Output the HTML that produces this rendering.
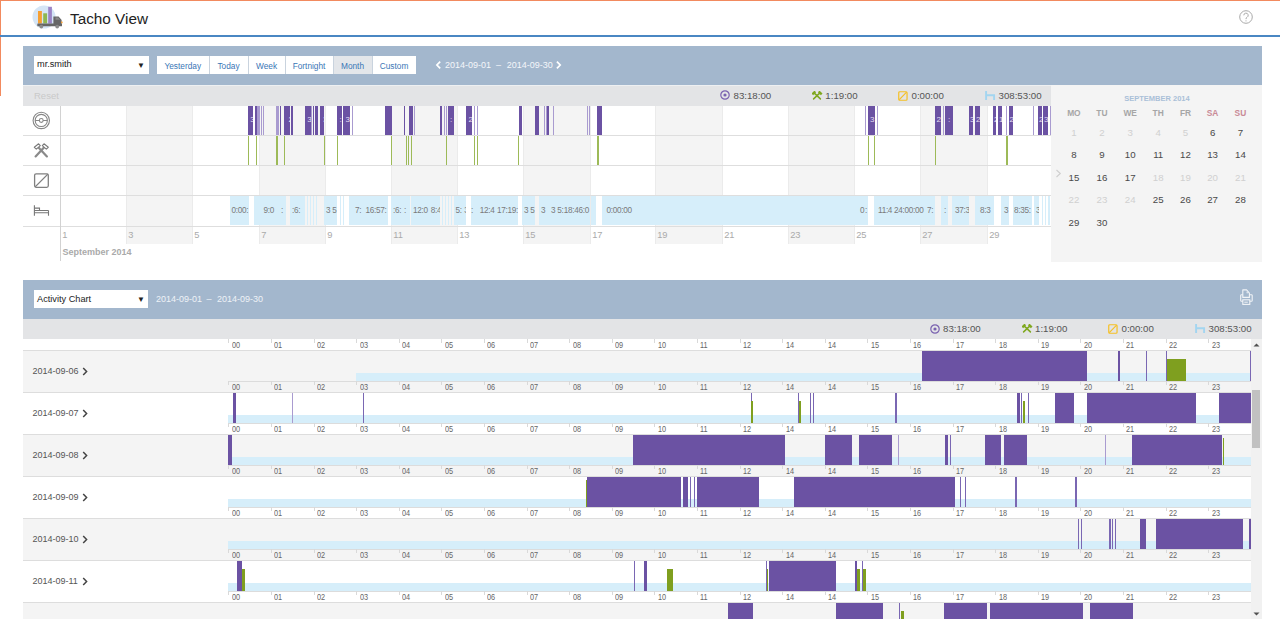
<!DOCTYPE html><html><head><meta charset="utf-8"><title>Tacho View</title><style>
*{margin:0;padding:0;box-sizing:border-box}
html,body{width:1280px;height:621px;overflow:hidden;background:#fff;font-family:"Liberation Sans",sans-serif;color:#333}
.a{position:absolute}
.t{position:absolute;white-space:nowrap}
</style></head><body><div style="position:absolute;left:0.00px;top:0.00px;width:1280.00px;height:1.00px;background:#f28a5e;"></div><div style="position:absolute;left:0.00px;top:0.00px;width:1.00px;height:96.00px;background:#f28a5e;"></div><svg class="a" style="left:0;top:0" width="70" height="34" viewBox="0 0 70 34">
<circle cx="44" cy="17" r="11.5" fill="#d5e5f5"/>
<rect x="38" y="11" width="3.9" height="12.5" fill="#f7a033"/>
<rect x="43.2" y="13.3" width="3.9" height="10.2" fill="#8fb850"/>
<rect x="48.2" y="6.8" width="3.7" height="16.7" fill="#9b84c6"/>
<path d="M53.4 16.4 h5.2 l3 3.6 v4 h-8.2z" fill="#666"/>
<path d="M55.5 17.4 h2.6 l2 2.4 h-4.6z" fill="#888"/>
<rect x="37.3" y="23.5" width="24.7" height="2.8" rx="0.6" fill="#666"/>
<circle cx="41.3" cy="26.6" r="1.9" fill="#8a8a8a"/>
<circle cx="57.2" cy="26.6" r="1.9" fill="#8a8a8a"/>
<rect x="61" y="21.6" width="1.6" height="1.6" fill="#f7a033"/>
</svg><div class="t" style="left:70px;top:9.6px;font-size:15.3px;color:#222">Tacho View</div><div style="position:absolute;left:0.00px;top:35.00px;width:1280.00px;height:2.00px;background:#4a87c3;"></div><svg class="a" style="left:1238px;top:9px" width="16" height="16" viewBox="0 0 16 16">
<circle cx="8" cy="8" r="6.3" fill="none" stroke="#aaa" stroke-width="1"/>
<path d="M5.8 6.3 a2.2 2.2 0 1 1 3.2 2 c-0.8 0.4 -1 0.9 -1 1.8" fill="none" stroke="#aaa" stroke-width="1"/>
<circle cx="8" cy="11.8" r="0.6" fill="#aaa"/>
</svg><div style="position:absolute;left:23.00px;top:46.00px;width:1239.00px;height:39.00px;background:#a3b7cd;"></div><div class="a" style="left:34px;top:56px;width:114.6px;height:18px;background:#fff"></div><div class="t" style="left:37px;top:59px;font-size:9.2px;color:#222">mr.smith</div><div class="t" style="left:137px;top:60.8px;font-size:8px;color:#222">&#9660;</div><div class="a" style="left:156.5px;top:56px;width:52.5px;height:18px;background:#fff;text-align:center;font-size:8.3px;line-height:20.2px;color:#3a76b6">Yesterday</div><div class="a" style="left:209px;top:56px;width:39px;height:18px;background:#fff;text-align:center;font-size:8.3px;line-height:20.2px;color:#3a76b6">Today</div><div style="position:absolute;left:209.00px;top:56.00px;width:1.00px;height:18.00px;background:#c9d3de;"></div><div class="a" style="left:248px;top:56px;width:37px;height:18px;background:#fff;text-align:center;font-size:8.3px;line-height:20.2px;color:#3a76b6">Week</div><div style="position:absolute;left:248.00px;top:56.00px;width:1.00px;height:18.00px;background:#c9d3de;"></div><div class="a" style="left:285px;top:56px;width:48px;height:18px;background:#fff;text-align:center;font-size:8.3px;line-height:20.2px;color:#3a76b6">Fortnight</div><div style="position:absolute;left:285.00px;top:56.00px;width:1.00px;height:18.00px;background:#c9d3de;"></div><div class="a" style="left:333px;top:56px;width:39px;height:18px;background:#e3e6ea;text-align:center;font-size:8.3px;line-height:20.2px;color:#3a76b6">Month</div><div style="position:absolute;left:333.00px;top:56.00px;width:1.00px;height:18.00px;background:#c9d3de;"></div><div class="a" style="left:372px;top:56px;width:44px;height:18px;background:#fff;text-align:center;font-size:8.3px;line-height:20.2px;color:#3a76b6">Custom</div><div style="position:absolute;left:372.00px;top:56.00px;width:1.00px;height:18.00px;background:#c9d3de;"></div><svg class="a" style="left:434px;top:60px" width="8" height="10" viewBox="0 0 8 10"><path d="M6.2 1.7 L2.9 5 L6.2 8.3" fill="none" stroke="#fff" stroke-width="1.7"/></svg><div class="t" style="left:445px;top:60px;font-size:9px;color:#f4f6fa">2014-09-01</div><div class="t" style="left:496px;top:60px;font-size:9px;color:#f4f6fa">&ndash;</div><div class="t" style="left:506.7px;top:60px;font-size:9px;color:#f4f6fa">2014-09-30</div><svg class="a" style="left:554px;top:60px" width="8" height="10" viewBox="0 0 8 10"><path d="M2.9 1.7 L6.2 5 L2.9 8.3" fill="none" stroke="#fff" stroke-width="1.7"/></svg><div style="position:absolute;left:23.00px;top:85.00px;width:1029.00px;height:21.00px;background:#e3e4e6;"></div><div style="position:absolute;left:23.00px;top:85.00px;width:1029.00px;height:1.00px;background:#eef0f2;"></div><div class="t" style="left:34px;top:90px;font-size:9.5px;color:#c9c9c9">Reset</div><svg class="a" style="left:719px;top:89.3px" width="12" height="12" viewBox="0 0 12 12"><circle cx="6" cy="6" r="4.2" fill="none" stroke="#7a62b0" stroke-width="1.2"/><circle cx="6" cy="6" r="1.6" fill="#7a62b0"/></svg><div class="t" style="left:733.5px;top:89.6px;font-size:9.7px;color:#555">83:18:00</div><svg class="a" style="left:812.0px;top:90.7px" width="11" height="10" viewBox="0 0 11 10"><path d="M2.0 1.9 L8.4 7.9 M8.0 1.9 L1.6 7.9" stroke="#7fa81f" stroke-width="1.5" fill="none" stroke-linecap="round"/><path d="M0.3 3.4 L3.3 0.4 M6.7 0.4 L9.7 3.4" stroke="#7fa81f" stroke-width="2.3" fill="none" stroke-linecap="butt"/></svg><div class="t" style="left:825.3px;top:89.6px;font-size:9.7px;color:#555">1:19:00</div><svg class="a" style="left:898px;top:90.5px" width="10" height="10" viewBox="0 0 10 10"><rect x="0.75" y="0.75" width="8.3" height="8.5" rx="1" fill="none" stroke="#f5c026" stroke-width="1.2"/><path d="M1.3 8.6 L8.6 1.2" stroke="#f5c026" stroke-width="1.2"/></svg><div class="t" style="left:911.5px;top:89.6px;font-size:9.7px;color:#555">0:00:00</div><svg class="a" style="left:985px;top:90.8px" width="11" height="10" viewBox="0 0 11 10"><path d="M1.1 0 V9 M1.1 4.3 H9.1 V9" fill="none" stroke="#a3d5f0" stroke-width="1.9"/></svg><div class="t" style="left:998.5px;top:89.6px;font-size:9.7px;color:#555">308:53:00</div><div style="position:absolute;left:60.00px;top:106.00px;width:1.00px;height:137.50px;background:#ebebeb;"></div><div class="t" style="left:62.2px;top:230.2px;font-size:9.3px;color:#aaa">1</div><div style="position:absolute;left:126.00px;top:106.00px;width:66.00px;height:137.50px;background:#f4f4f4;"></div><div style="position:absolute;left:126.00px;top:106.00px;width:1.00px;height:137.50px;background:#ebebeb;"></div><div class="t" style="left:128.2px;top:230.2px;font-size:9.3px;color:#aaa">3</div><div style="position:absolute;left:192.00px;top:106.00px;width:1.00px;height:137.50px;background:#ebebeb;"></div><div class="t" style="left:194.2px;top:230.2px;font-size:9.3px;color:#aaa">5</div><div style="position:absolute;left:259.00px;top:106.00px;width:66.00px;height:137.50px;background:#f4f4f4;"></div><div style="position:absolute;left:259.00px;top:106.00px;width:1.00px;height:137.50px;background:#ebebeb;"></div><div class="t" style="left:261.2px;top:230.2px;font-size:9.3px;color:#aaa">7</div><div style="position:absolute;left:325.00px;top:106.00px;width:1.00px;height:137.50px;background:#ebebeb;"></div><div class="t" style="left:327.2px;top:230.2px;font-size:9.3px;color:#aaa">9</div><div style="position:absolute;left:391.00px;top:106.00px;width:66.00px;height:137.50px;background:#f4f4f4;"></div><div style="position:absolute;left:391.00px;top:106.00px;width:1.00px;height:137.50px;background:#ebebeb;"></div><div class="t" style="left:393.2px;top:230.2px;font-size:9.3px;color:#aaa">11</div><div style="position:absolute;left:457.00px;top:106.00px;width:1.00px;height:137.50px;background:#ebebeb;"></div><div class="t" style="left:459.2px;top:230.2px;font-size:9.3px;color:#aaa">13</div><div style="position:absolute;left:523.00px;top:106.00px;width:67.00px;height:137.50px;background:#f4f4f4;"></div><div style="position:absolute;left:523.00px;top:106.00px;width:1.00px;height:137.50px;background:#ebebeb;"></div><div class="t" style="left:525.2px;top:230.2px;font-size:9.3px;color:#aaa">15</div><div style="position:absolute;left:590.00px;top:106.00px;width:1.00px;height:137.50px;background:#ebebeb;"></div><div class="t" style="left:592.2px;top:230.2px;font-size:9.3px;color:#aaa">17</div><div style="position:absolute;left:655.00px;top:106.00px;width:67.00px;height:137.50px;background:#f4f4f4;"></div><div style="position:absolute;left:655.00px;top:106.00px;width:1.00px;height:137.50px;background:#ebebeb;"></div><div class="t" style="left:657.2px;top:230.2px;font-size:9.3px;color:#aaa">19</div><div style="position:absolute;left:722.00px;top:106.00px;width:1.00px;height:137.50px;background:#ebebeb;"></div><div class="t" style="left:724.2px;top:230.2px;font-size:9.3px;color:#aaa">21</div><div style="position:absolute;left:788.00px;top:106.00px;width:66.00px;height:137.50px;background:#f4f4f4;"></div><div style="position:absolute;left:788.00px;top:106.00px;width:1.00px;height:137.50px;background:#ebebeb;"></div><div class="t" style="left:790.2px;top:230.2px;font-size:9.3px;color:#aaa">23</div><div style="position:absolute;left:854.00px;top:106.00px;width:1.00px;height:137.50px;background:#ebebeb;"></div><div class="t" style="left:856.2px;top:230.2px;font-size:9.3px;color:#aaa">25</div><div style="position:absolute;left:920.00px;top:106.00px;width:67.00px;height:137.50px;background:#f4f4f4;"></div><div style="position:absolute;left:920.00px;top:106.00px;width:1.00px;height:137.50px;background:#ebebeb;"></div><div class="t" style="left:922.2px;top:230.2px;font-size:9.3px;color:#aaa">27</div><div style="position:absolute;left:987.00px;top:106.00px;width:1.00px;height:137.50px;background:#ebebeb;"></div><div class="t" style="left:989.2px;top:230.2px;font-size:9.3px;color:#aaa">29</div><div style="position:absolute;left:23.00px;top:135.00px;width:1029.00px;height:1.00px;background:#dedede;"></div><div style="position:absolute;left:23.00px;top:165.00px;width:1029.00px;height:1.00px;background:#dedede;"></div><div style="position:absolute;left:23.00px;top:195.00px;width:1029.00px;height:1.00px;background:#dedede;"></div><div style="position:absolute;left:23.00px;top:226.00px;width:1029.00px;height:1.00px;background:#dedede;"></div><div style="position:absolute;left:60.00px;top:106.00px;width:1.20px;height:155.00px;background:#d2d2d2;"></div><div class="t" style="left:62.5px;top:247px;font-size:9px;font-weight:bold;color:#aaa">September 2014</div><svg class="a" style="left:30px;top:109px" width="22" height="22" viewBox="30 109 22 22">
<circle cx="41.27" cy="120.47" r="8.2" fill="none" stroke="#868686" stroke-width="1.1"/>
<circle cx="41.27" cy="120.47" r="6.1" fill="none" stroke="#868686" stroke-width="1.1"/>
<circle cx="41.27" cy="120.47" r="1.9" fill="none" stroke="#868686" stroke-width="1.1"/>
<path d="M35.2 120.47 H39.4 M43.1 120.47 H47.3" stroke="#868686" stroke-width="1.1"/>
</svg><svg class="a" style="left:30px;top:140px" width="22" height="20" viewBox="30 140 22 20">
<path d="M35.6 156.4 L44.2 147.2 M46.9 156.4 L38.3 147.2" stroke="#8a8a8a" stroke-width="2.2" stroke-linecap="round" fill="none"/>
<path d="M34.3 147.3 L38.6 143.8 L40.3 145.7 L36.3 149.1 Z" fill="#fff" stroke="#7a7a7a" stroke-width="1.1" stroke-linejoin="round"/>
<path d="M48.3 147.3 L44.0 143.8 L42.3 145.7 L46.3 149.1 Z" fill="#fff" stroke="#7a7a7a" stroke-width="1.1" stroke-linejoin="round"/>
</svg><svg class="a" style="left:30px;top:170px" width="22" height="20" viewBox="30 170 22 20">
<rect x="34.6" y="173.8" width="13.7" height="13.5" rx="1.5" fill="none" stroke="#808080" stroke-width="1.3"/>
<path d="M35 187 L48 174" stroke="#808080" stroke-width="1.1"/>
</svg><svg class="a" style="left:30px;top:200px" width="22" height="20" viewBox="30 200 22 20">
<path d="M34.4 205.3 V215.8 M48.5 210.6 V215.8" stroke="#777" stroke-width="1.1" fill="none"/>
<path d="M34.4 208.1 H39.5 V210.5" stroke="#777" stroke-width="1.1" fill="none"/>
<path d="M34.4 210.5 H48.5 M34.4 212.7 H48.5" stroke="#777" stroke-width="1.1" fill="none"/>
</svg><div class="a" style="left:248.00px;top:106px;width:5.00px;height:29px;background:#6b52a3;overflow:hidden"><span class="t" style="left:2.20px;top:8.6px;font-size:8px;color:#e4def2">3</span></div><div class="a" style="left:254.90px;top:106px;width:1.70px;height:29px;background:#6b52a3;overflow:hidden"></div><div class="a" style="left:256.90px;top:106px;width:2.80px;height:29px;background:#a99bd0;overflow:hidden"></div><div class="a" style="left:261.00px;top:106px;width:1.00px;height:29px;background:#a99bd0;overflow:hidden"></div><div class="a" style="left:263.10px;top:106px;width:0.90px;height:29px;background:#a99bd0;overflow:hidden"></div><div class="a" style="left:275.90px;top:106px;width:3.50px;height:29px;background:#a99bd0;overflow:hidden"></div><div class="a" style="left:280.00px;top:106px;width:1.10px;height:29px;background:#6b52a3;overflow:hidden"></div><div class="a" style="left:284.10px;top:106px;width:5.90px;height:29px;background:#6b52a3;overflow:hidden"><span class="t" style="left:4.40px;top:8.6px;font-size:8px;color:#e4def2">2</span></div><div class="a" style="left:290.80px;top:106px;width:1.80px;height:29px;background:#6b52a3;overflow:hidden"></div><div class="a" style="left:305.20px;top:106px;width:5.40px;height:29px;background:#6b52a3;overflow:hidden"><span class="t" style="left:2.00px;top:8.6px;font-size:8px;color:#e4def2">3</span></div><div class="a" style="left:311.00px;top:106px;width:1.00px;height:29px;background:#a99bd0;overflow:hidden"></div><div class="a" style="left:312.80px;top:106px;width:1.00px;height:29px;background:#6b52a3;overflow:hidden"></div><div class="a" style="left:314.90px;top:106px;width:3.10px;height:29px;background:#6b52a3;overflow:hidden"></div><div class="a" style="left:320.20px;top:106px;width:3.80px;height:29px;background:#6b52a3;overflow:hidden"><span class="t" style="left:2.80px;top:8.6px;font-size:8px;color:#e4def2">3</span></div><div class="a" style="left:336.60px;top:106px;width:5.40px;height:29px;background:#6b52a3;overflow:hidden"><span class="t" style="left:2.90px;top:8.6px;font-size:8px;color:#e4def2">:</span></div><div class="a" style="left:343.30px;top:106px;width:6.70px;height:29px;background:#6b52a3;overflow:hidden"><span class="t" style="left:2.20px;top:8.6px;font-size:8px;color:#e4def2">3</span></div><div class="a" style="left:352.00px;top:106px;width:1.00px;height:29px;background:#a99bd0;overflow:hidden"></div><div class="a" style="left:385.30px;top:106px;width:6.70px;height:29px;background:#6b52a3;overflow:hidden"></div><div class="a" style="left:404.00px;top:106px;width:1.00px;height:29px;background:#6b52a3;overflow:hidden"></div><div class="a" style="left:408.60px;top:106px;width:4.00px;height:29px;background:#6b52a3;overflow:hidden"></div><div class="a" style="left:413.60px;top:106px;width:1.00px;height:29px;background:#a99bd0;overflow:hidden"></div><div class="a" style="left:440.40px;top:106px;width:1.60px;height:29px;background:#6b52a3;overflow:hidden"></div><div class="a" style="left:443.50px;top:106px;width:1.00px;height:29px;background:#a99bd0;overflow:hidden"></div><div class="a" style="left:446.00px;top:106px;width:1.00px;height:29px;background:#a99bd0;overflow:hidden"></div><div class="a" style="left:448.10px;top:106px;width:5.50px;height:29px;background:#6b52a3;overflow:hidden"><span class="t" style="left:1.90px;top:8.6px;font-size:8px;color:#e4def2">:</span></div><div class="a" style="left:466.40px;top:106px;width:5.50px;height:29px;background:#6b52a3;overflow:hidden"><span class="t" style="left:2.10px;top:8.6px;font-size:8px;color:#e4def2">2</span></div><div class="a" style="left:474.00px;top:106px;width:1.00px;height:29px;background:#a99bd0;overflow:hidden"></div><div class="a" style="left:477.00px;top:106px;width:1.00px;height:29px;background:#a99bd0;overflow:hidden"></div><div class="a" style="left:519.10px;top:106px;width:2.70px;height:29px;background:#6b52a3;overflow:hidden"></div><div class="a" style="left:535.40px;top:106px;width:3.60px;height:29px;background:#6b52a3;overflow:hidden"></div><div class="a" style="left:544.00px;top:106px;width:1.00px;height:29px;background:#a99bd0;overflow:hidden"></div><div class="a" style="left:546.00px;top:106px;width:1.00px;height:29px;background:#a99bd0;overflow:hidden"></div><div class="a" style="left:547.00px;top:106px;width:2.00px;height:29px;background:#6b52a3;overflow:hidden"></div><div class="a" style="left:553.00px;top:106px;width:1.00px;height:29px;background:#a99bd0;overflow:hidden"></div><div class="a" style="left:586.50px;top:106px;width:1.00px;height:29px;background:#a99bd0;overflow:hidden"></div><div class="a" style="left:589.00px;top:106px;width:1.00px;height:29px;background:#a99bd0;overflow:hidden"></div><div class="a" style="left:597.00px;top:106px;width:5.00px;height:29px;background:#6b52a3;overflow:hidden"></div><div class="a" style="left:865.00px;top:106px;width:1.00px;height:29px;background:#a99bd0;overflow:hidden"></div><div class="a" style="left:868.10px;top:106px;width:7.10px;height:29px;background:#6b52a3;overflow:hidden"><span class="t" style="left:1.90px;top:8.6px;font-size:8px;color:#e4def2">3</span></div><div class="a" style="left:876.50px;top:106px;width:1.00px;height:29px;background:#a99bd0;overflow:hidden"></div><div class="a" style="left:935.00px;top:106px;width:6.10px;height:29px;background:#6b52a3;overflow:hidden"><span class="t" style="left:1.50px;top:8.6px;font-size:8px;color:#e4def2">2</span></div><div class="a" style="left:943.00px;top:106px;width:1.00px;height:29px;background:#a99bd0;overflow:hidden"></div><div class="a" style="left:945.20px;top:106px;width:8.10px;height:29px;background:#6b52a3;overflow:hidden"><span class="t" style="left:2.80px;top:8.6px;font-size:8px;color:#e4def2">:</span></div><div class="a" style="left:968.90px;top:106px;width:3.80px;height:29px;background:#6b52a3;overflow:hidden"><span class="t" style="left:1.10px;top:8.6px;font-size:8px;color:#e4def2">3</span></div><div class="a" style="left:975.00px;top:106px;width:4.70px;height:29px;background:#6b52a3;overflow:hidden"><span class="t" style="left:1.00px;top:8.6px;font-size:8px;color:#e4def2">2</span></div><div class="a" style="left:993.20px;top:106px;width:2.80px;height:29px;background:#6b52a3;overflow:hidden"><span class="t" style="left:0.80px;top:8.6px;font-size:8px;color:#e4def2">2</span></div><div class="a" style="left:997.90px;top:106px;width:4.10px;height:29px;background:#6b52a3;overflow:hidden"><span class="t" style="left:1.10px;top:8.6px;font-size:8px;color:#e4def2">1</span></div><div class="a" style="left:1006.00px;top:106px;width:1.00px;height:29px;background:#a99bd0;overflow:hidden"></div><div class="a" style="left:1009.00px;top:106px;width:3.50px;height:29px;background:#6b52a3;overflow:hidden"><span class="t" style="left:0.50px;top:8.6px;font-size:8px;color:#e4def2">2</span></div><div class="a" style="left:1032.50px;top:106px;width:1.00px;height:29px;background:#a99bd0;overflow:hidden"></div><div class="a" style="left:1038.00px;top:106px;width:4.00px;height:29px;background:#6b52a3;overflow:hidden"><span class="t" style="left:1.00px;top:8.6px;font-size:8px;color:#e4def2">2</span></div><div class="a" style="left:1043.00px;top:106px;width:5.00px;height:29px;background:#6b52a3;overflow:hidden"><span class="t" style="left:1.00px;top:8.6px;font-size:8px;color:#e4def2">3</span></div><div class="a" style="left:1050.00px;top:106px;width:1.00px;height:29px;background:#a99bd0;overflow:hidden"></div><div style="position:absolute;left:248.00px;top:136.00px;width:1.00px;height:29.00px;background:#9dba58;"></div><div style="position:absolute;left:256.00px;top:136.00px;width:1.00px;height:29.00px;background:#9dba58;"></div><div style="position:absolute;left:276.00px;top:136.00px;width:1.00px;height:29.00px;background:#9dba58;"></div><div style="position:absolute;left:277.00px;top:136.00px;width:1.00px;height:29.00px;background:#9dba58;"></div><div style="position:absolute;left:284.00px;top:136.00px;width:1.00px;height:29.00px;background:#9dba58;"></div><div style="position:absolute;left:324.00px;top:136.00px;width:1.00px;height:29.00px;background:#9dba58;"></div><div style="position:absolute;left:337.00px;top:136.00px;width:1.00px;height:29.00px;background:#9dba58;"></div><div style="position:absolute;left:391.00px;top:136.00px;width:1.00px;height:29.00px;background:#9dba58;"></div><div style="position:absolute;left:406.00px;top:136.00px;width:1.00px;height:29.00px;background:#9dba58;"></div><div style="position:absolute;left:408.00px;top:136.00px;width:1.00px;height:29.00px;background:#9dba58;"></div><div style="position:absolute;left:411.00px;top:136.00px;width:1.00px;height:29.00px;background:#9dba58;"></div><div style="position:absolute;left:446.00px;top:136.00px;width:1.00px;height:29.00px;background:#9dba58;"></div><div style="position:absolute;left:474.00px;top:136.00px;width:1.00px;height:29.00px;background:#9dba58;"></div><div style="position:absolute;left:477.00px;top:136.00px;width:1.00px;height:29.00px;background:#9dba58;"></div><div style="position:absolute;left:518.00px;top:136.00px;width:1.00px;height:29.00px;background:#9dba58;"></div><div style="position:absolute;left:597.00px;top:136.00px;width:1.00px;height:29.00px;background:#9dba58;"></div><div style="position:absolute;left:598.00px;top:136.00px;width:1.00px;height:29.00px;background:#9dba58;"></div><div style="position:absolute;left:868.00px;top:136.00px;width:1.00px;height:29.00px;background:#9dba58;"></div><div style="position:absolute;left:874.00px;top:136.00px;width:1.00px;height:29.00px;background:#9dba58;"></div><div style="position:absolute;left:935.00px;top:136.00px;width:1.00px;height:29.00px;background:#9dba58;"></div><div style="position:absolute;left:1006.00px;top:136.00px;width:1.00px;height:29.00px;background:#9dba58;"></div><div style="position:absolute;left:1007.00px;top:136.00px;width:1.00px;height:29.00px;background:#9dba58;"></div><div class="a" style="left:230.10px;top:196px;width:18.70px;height:29px;background:#d6eefa;overflow:hidden"><span class="t" style="left:1.40px;top:9.8px;font-size:8.2px;letter-spacing:-0.3px;color:#7a7a7a">0:00:</span></div><div class="a" style="left:253.50px;top:196px;width:32.50px;height:29px;background:#d6eefa;overflow:hidden"><span class="t" style="left:10.00px;top:9.8px;font-size:8.2px;letter-spacing:-0.3px;color:#7a7a7a">9:0</span><span class="t" style="left:27.50px;top:9.8px;font-size:8.2px;letter-spacing:-0.3px;color:#7a7a7a">:</span></div><div class="a" style="left:290.00px;top:196px;width:15.20px;height:29px;background:#d6eefa;overflow:hidden"><span class="t" style="left:2.00px;top:9.8px;font-size:8.2px;letter-spacing:-0.3px;color:#7a7a7a">:6:</span></div><div class="a" style="left:307.00px;top:196px;width:1.00px;height:29px;background:#d6eefa;overflow:hidden"></div><div class="a" style="left:310.00px;top:196px;width:1.00px;height:29px;background:#d6eefa;overflow:hidden"></div><div class="a" style="left:313.00px;top:196px;width:1.00px;height:29px;background:#d6eefa;overflow:hidden"></div><div class="a" style="left:316.00px;top:196px;width:1.00px;height:29px;background:#d6eefa;overflow:hidden"></div><div class="a" style="left:323.90px;top:196px;width:12.70px;height:29px;background:#d6eefa;overflow:hidden"><span class="t" style="left:2.10px;top:9.8px;font-size:8.2px;letter-spacing:-0.3px;color:#7a7a7a">3 5:</span></div><div class="a" style="left:340.00px;top:196px;width:1.00px;height:29px;background:#d6eefa;overflow:hidden"></div><div class="a" style="left:343.00px;top:196px;width:1.00px;height:29px;background:#d6eefa;overflow:hidden"></div><div class="a" style="left:348.80px;top:196px;width:39.60px;height:29px;background:#d6eefa;overflow:hidden"><span class="t" style="left:6.20px;top:9.8px;font-size:8.2px;letter-spacing:-0.3px;color:#7a7a7a">7:</span><span class="t" style="left:16.70px;top:9.8px;font-size:8.2px;letter-spacing:-0.3px;color:#7a7a7a">16:57:</span></div><div class="a" style="left:391.00px;top:196px;width:18.70px;height:29px;background:#d6eefa;overflow:hidden"><span class="t" style="left:2.00px;top:9.8px;font-size:8.2px;letter-spacing:-0.3px;color:#7a7a7a">:6:</span><span class="t" style="left:13.00px;top:9.8px;font-size:8.2px;letter-spacing:-0.3px;color:#7a7a7a">:</span></div><div class="a" style="left:410.70px;top:196px;width:29.70px;height:29px;background:#d6eefa;overflow:hidden"><span class="t" style="left:2.30px;top:9.8px;font-size:8.2px;letter-spacing:-0.3px;color:#7a7a7a">12:0</span><span class="t" style="left:20.00px;top:9.8px;font-size:8.2px;letter-spacing:-0.3px;color:#7a7a7a">8:4</span></div><div class="a" style="left:442.00px;top:196px;width:1.00px;height:29px;background:#d6eefa;overflow:hidden"></div><div class="a" style="left:445.00px;top:196px;width:1.00px;height:29px;background:#d6eefa;overflow:hidden"></div><div class="a" style="left:448.00px;top:196px;width:1.00px;height:29px;background:#d6eefa;overflow:hidden"></div><div class="a" style="left:451.00px;top:196px;width:1.00px;height:29px;background:#d6eefa;overflow:hidden"></div><div class="a" style="left:454.20px;top:196px;width:12.20px;height:29px;background:#d6eefa;overflow:hidden"><span class="t" style="left:1.30px;top:9.8px;font-size:8.2px;letter-spacing:-0.3px;color:#7a7a7a">5:</span><span class="t" style="left:10.00px;top:9.8px;font-size:8.2px;letter-spacing:-0.3px;color:#7a7a7a">3</span></div><div class="a" style="left:470.90px;top:196px;width:47.00px;height:29px;background:#d6eefa;overflow:hidden"><span class="t" style="left:0.10px;top:9.8px;font-size:8.2px;letter-spacing:-0.3px;color:#7a7a7a">:</span><span class="t" style="left:8.90px;top:9.8px;font-size:8.2px;letter-spacing:-0.3px;color:#7a7a7a">12:4</span><span class="t" style="left:26.10px;top:9.8px;font-size:8.2px;letter-spacing:-0.3px;color:#7a7a7a">17:19:</span></div><div class="a" style="left:522.20px;top:196px;width:13.20px;height:29px;background:#d6eefa;overflow:hidden"><span class="t" style="left:1.80px;top:9.8px;font-size:8.2px;letter-spacing:-0.3px;color:#7a7a7a">3 5:</span></div><div class="a" style="left:538.80px;top:196px;width:51.30px;height:29px;background:#d6eefa;overflow:hidden"><span class="t" style="left:2.20px;top:9.8px;font-size:8.2px;letter-spacing:-0.3px;color:#7a7a7a">3</span><span class="t" style="left:12.20px;top:9.8px;font-size:8.2px;letter-spacing:-0.3px;color:#7a7a7a">3 5:</span><span class="t" style="left:24.90px;top:9.8px;font-size:8.2px;letter-spacing:-0.3px;color:#7a7a7a">18:46:0</span></div><div class="a" style="left:591.00px;top:196px;width:5.00px;height:29px;background:#d6eefa;overflow:hidden"></div><div class="a" style="left:601.60px;top:196px;width:266.50px;height:29px;background:#d6eefa;overflow:hidden"><span class="t" style="left:4.90px;top:9.8px;font-size:8.2px;letter-spacing:-0.3px;color:#7a7a7a">0:00:00</span><span class="t" style="left:258.40px;top:9.8px;font-size:8.2px;letter-spacing:-0.3px;color:#7a7a7a">0</span><span class="t" style="left:263.40px;top:9.8px;font-size:8.2px;letter-spacing:-0.3px;color:#7a7a7a">:</span></div><div class="a" style="left:874.20px;top:196px;width:60.80px;height:29px;background:#d6eefa;overflow:hidden"><span class="t" style="left:3.80px;top:9.8px;font-size:8.2px;letter-spacing:-0.3px;color:#7a7a7a">11:4</span><span class="t" style="left:19.80px;top:9.8px;font-size:8.2px;letter-spacing:-0.3px;color:#7a7a7a">24:00:00</span><span class="t" style="left:52.90px;top:9.8px;font-size:8.2px;letter-spacing:-0.3px;color:#7a7a7a">7:</span></div><div class="a" style="left:941.00px;top:196px;width:7.00px;height:29px;background:#d6eefa;overflow:hidden"><span class="t" style="left:3.00px;top:9.8px;font-size:8.2px;letter-spacing:-0.3px;color:#7a7a7a">:</span></div><div class="a" style="left:952.00px;top:196px;width:17.00px;height:29px;background:#d6eefa;overflow:hidden"><span class="t" style="left:3.00px;top:9.8px;font-size:8.2px;letter-spacing:-0.3px;color:#7a7a7a">37:3</span></div><div class="a" style="left:975.00px;top:196px;width:18.70px;height:29px;background:#d6eefa;overflow:hidden"><span class="t" style="left:5.00px;top:9.8px;font-size:8.2px;letter-spacing:-0.3px;color:#7a7a7a">8:3</span></div><div class="a" style="left:1000.50px;top:196px;width:8.50px;height:29px;background:#d6eefa;overflow:hidden"><span class="t" style="left:3.50px;top:9.8px;font-size:8.2px;letter-spacing:-0.3px;color:#7a7a7a">3</span></div><div class="a" style="left:1012.70px;top:196px;width:19.80px;height:29px;background:#d6eefa;overflow:hidden"><span class="t" style="left:1.30px;top:9.8px;font-size:8.2px;letter-spacing:-0.3px;color:#7a7a7a">8:35:</span></div><div class="a" style="left:1033.50px;top:196px;width:5.50px;height:29px;background:#d6eefa;overflow:hidden"><span class="t" style="left:2.50px;top:9.8px;font-size:8.2px;letter-spacing:-0.3px;color:#7a7a7a">3</span></div><div class="a" style="left:1042.00px;top:196px;width:1.00px;height:29px;background:#d6eefa;overflow:hidden"></div><div class="a" style="left:1045.00px;top:196px;width:1.00px;height:29px;background:#d6eefa;overflow:hidden"></div><div class="a" style="left:1048.00px;top:196px;width:2.00px;height:29px;background:#d6eefa;overflow:hidden"></div><div style="position:absolute;left:1051.00px;top:85.00px;width:211.00px;height:177.00px;background:#f4f4f4;"></div><div class="t" style="left:1052px;top:94px;width:210px;text-align:center;font-size:7.5px;font-weight:bold;color:#aac0d8">SEPTEMBER 2014</div><div class="t" style="left:1058.9px;top:108.3px;width:30px;text-align:center;font-size:8.4px;font-weight:bold;color:#a6a6a6">MO</div><div class="t" style="left:1086.9px;top:108.3px;width:30px;text-align:center;font-size:8.4px;font-weight:bold;color:#a6a6a6">TU</div><div class="t" style="left:1115.2px;top:108.3px;width:30px;text-align:center;font-size:8.4px;font-weight:bold;color:#a6a6a6">WE</div><div class="t" style="left:1143.2px;top:108.3px;width:30px;text-align:center;font-size:8.4px;font-weight:bold;color:#a6a6a6">TH</div><div class="t" style="left:1170.5px;top:108.3px;width:30px;text-align:center;font-size:8.4px;font-weight:bold;color:#a6a6a6">FR</div><div class="t" style="left:1197.6px;top:108.3px;width:30px;text-align:center;font-size:8.4px;font-weight:bold;color:#c98a96">SA</div><div class="t" style="left:1225.4px;top:108.3px;width:30px;text-align:center;font-size:8.4px;font-weight:bold;color:#c98a96">SU</div><div class="t" style="left:1058.9px;top:126.9px;width:30px;text-align:center;font-size:9.7px;color:#d0d0d0">1</div><div class="t" style="left:1086.9px;top:126.9px;width:30px;text-align:center;font-size:9.7px;color:#d0d0d0">2</div><div class="t" style="left:1115.2px;top:126.9px;width:30px;text-align:center;font-size:9.7px;color:#d0d0d0">3</div><div class="t" style="left:1143.2px;top:126.9px;width:30px;text-align:center;font-size:9.7px;color:#d0d0d0">4</div><div class="t" style="left:1170.5px;top:126.9px;width:30px;text-align:center;font-size:9.7px;color:#d0d0d0">5</div><div class="t" style="left:1197.6px;top:126.9px;width:30px;text-align:center;font-size:9.7px;color:#494949">6</div><div class="t" style="left:1225.4px;top:126.9px;width:30px;text-align:center;font-size:9.7px;color:#494949">7</div><div class="t" style="left:1058.9px;top:149.3px;width:30px;text-align:center;font-size:9.7px;color:#494949">8</div><div class="t" style="left:1086.9px;top:149.3px;width:30px;text-align:center;font-size:9.7px;color:#494949">9</div><div class="t" style="left:1115.2px;top:149.3px;width:30px;text-align:center;font-size:9.7px;color:#494949">10</div><div class="t" style="left:1143.2px;top:149.3px;width:30px;text-align:center;font-size:9.7px;color:#494949">11</div><div class="t" style="left:1170.5px;top:149.3px;width:30px;text-align:center;font-size:9.7px;color:#494949">12</div><div class="t" style="left:1197.6px;top:149.3px;width:30px;text-align:center;font-size:9.7px;color:#494949">13</div><div class="t" style="left:1225.4px;top:149.3px;width:30px;text-align:center;font-size:9.7px;color:#494949">14</div><div class="t" style="left:1058.9px;top:171.8px;width:30px;text-align:center;font-size:9.7px;color:#494949">15</div><div class="t" style="left:1086.9px;top:171.8px;width:30px;text-align:center;font-size:9.7px;color:#494949">16</div><div class="t" style="left:1115.2px;top:171.8px;width:30px;text-align:center;font-size:9.7px;color:#494949">17</div><div class="t" style="left:1143.2px;top:171.8px;width:30px;text-align:center;font-size:9.7px;color:#d0d0d0">18</div><div class="t" style="left:1170.5px;top:171.8px;width:30px;text-align:center;font-size:9.7px;color:#d0d0d0">19</div><div class="t" style="left:1197.6px;top:171.8px;width:30px;text-align:center;font-size:9.7px;color:#d0d0d0">20</div><div class="t" style="left:1225.4px;top:171.8px;width:30px;text-align:center;font-size:9.7px;color:#d0d0d0">21</div><div class="t" style="left:1058.9px;top:194.3px;width:30px;text-align:center;font-size:9.7px;color:#d0d0d0">22</div><div class="t" style="left:1086.9px;top:194.3px;width:30px;text-align:center;font-size:9.7px;color:#d0d0d0">23</div><div class="t" style="left:1115.2px;top:194.3px;width:30px;text-align:center;font-size:9.7px;color:#d0d0d0">24</div><div class="t" style="left:1143.2px;top:194.3px;width:30px;text-align:center;font-size:9.7px;color:#494949">25</div><div class="t" style="left:1170.5px;top:194.3px;width:30px;text-align:center;font-size:9.7px;color:#494949">26</div><div class="t" style="left:1197.6px;top:194.3px;width:30px;text-align:center;font-size:9.7px;color:#494949">27</div><div class="t" style="left:1225.4px;top:194.3px;width:30px;text-align:center;font-size:9.7px;color:#494949">28</div><div class="t" style="left:1058.9px;top:216.8px;width:30px;text-align:center;font-size:9.7px;color:#494949">29</div><div class="t" style="left:1086.9px;top:216.8px;width:30px;text-align:center;font-size:9.7px;color:#494949">30</div><svg class="a" style="left:1055px;top:169px" width="7" height="9" viewBox="0 0 7 9"><path d="M1.5 1 L5.3 4.5 L1.5 8" fill="none" stroke="#cfcfcf" stroke-width="1.1"/></svg><div style="position:absolute;left:23.00px;top:280.00px;width:1239.00px;height:39.00px;background:#a3b7cd;"></div><div class="a" style="left:34px;top:290px;width:114px;height:18px;background:#fff"></div><div class="t" style="left:37px;top:293.8px;font-size:9.2px;color:#222">Activity Chart</div><div class="t" style="left:137px;top:294.8px;font-size:8px;color:#222">&#9660;</div><div class="t" style="left:156px;top:294px;font-size:9px;color:#eef2f7">2014-09-01</div><div class="t" style="left:206.5px;top:294px;font-size:9px;color:#eef2f7">&ndash;</div><div class="t" style="left:217px;top:294px;font-size:9px;color:#eef2f7">2014-09-30</div><svg class="a" style="left:1238px;top:288px" width="16" height="18" viewBox="0 0 16 18" opacity="0.85">
<rect x="2.7" y="6.7" width="11.5" height="6.6" rx="0.8" fill="none" stroke="#fff" stroke-width="1.1"/>
<path d="M4.8 9.4 V1.9 H8.6 L11.4 5.2 V9.4 Z" fill="#a3b7cd" stroke="#fff" stroke-width="1.1" stroke-linejoin="round"/>
<path d="M8.6 3.2 L10.3 5.2 H8.6 Z" fill="#fff"/>
<rect x="4.8" y="11.8" width="7.0" height="4.6" fill="#a3b7cd" stroke="#fff" stroke-width="1.1"/>
<path d="M6.3 14.2 H9.8" stroke="#fff" stroke-width="1"/>
</svg><div style="position:absolute;left:23.00px;top:319.00px;width:1239.00px;height:20.00px;background:#e3e4e6;"></div><svg class="a" style="left:928.5px;top:322.8px" width="12" height="12" viewBox="0 0 12 12"><circle cx="6" cy="6" r="4.2" fill="none" stroke="#7a62b0" stroke-width="1.2"/><circle cx="6" cy="6" r="1.6" fill="#7a62b0"/></svg><div class="t" style="left:943.0px;top:323.1px;font-size:9.7px;color:#555">83:18:00</div><svg class="a" style="left:1021.7px;top:324.2px" width="11" height="10" viewBox="0 0 11 10"><path d="M2.0 1.9 L8.4 7.9 M8.0 1.9 L1.6 7.9" stroke="#7fa81f" stroke-width="1.5" fill="none" stroke-linecap="round"/><path d="M0.3 3.4 L3.3 0.4 M6.7 0.4 L9.7 3.4" stroke="#7fa81f" stroke-width="2.3" fill="none" stroke-linecap="butt"/></svg><div class="t" style="left:1035.0px;top:323.1px;font-size:9.7px;color:#555">1:19:00</div><svg class="a" style="left:1108px;top:324.0px" width="10" height="10" viewBox="0 0 10 10"><rect x="0.75" y="0.75" width="8.3" height="8.5" rx="1" fill="none" stroke="#f5c026" stroke-width="1.2"/><path d="M1.3 8.6 L8.6 1.2" stroke="#f5c026" stroke-width="1.2"/></svg><div class="t" style="left:1121.5px;top:323.1px;font-size:9.7px;color:#555">0:00:00</div><svg class="a" style="left:1195px;top:324.3px" width="11" height="10" viewBox="0 0 11 10"><path d="M1.1 0 V9 M1.1 4.3 H9.1 V9" fill="none" stroke="#a3d5f0" stroke-width="1.9"/></svg><div class="t" style="left:1208.5px;top:323.1px;font-size:9.7px;color:#555">308:53:00</div><div style="position:absolute;left:228.40px;top:339.00px;width:1.00px;height:4.00px;background:#d9d9d9;"></div><div class="t" style="left:231.80px;top:339.8px;font-size:8.3px;color:#666;transform:scaleX(0.88);transform-origin:0 0">00</div><div style="position:absolute;left:271.00px;top:339.00px;width:1.00px;height:4.00px;background:#d9d9d9;"></div><div class="t" style="left:274.40px;top:339.8px;font-size:8.3px;color:#666;transform:scaleX(0.88);transform-origin:0 0">01</div><div style="position:absolute;left:313.60px;top:339.00px;width:1.00px;height:4.00px;background:#d9d9d9;"></div><div class="t" style="left:317.00px;top:339.8px;font-size:8.3px;color:#666;transform:scaleX(0.88);transform-origin:0 0">02</div><div style="position:absolute;left:356.20px;top:339.00px;width:1.00px;height:4.00px;background:#d9d9d9;"></div><div class="t" style="left:359.60px;top:339.8px;font-size:8.3px;color:#666;transform:scaleX(0.88);transform-origin:0 0">03</div><div style="position:absolute;left:398.80px;top:339.00px;width:1.00px;height:4.00px;background:#d9d9d9;"></div><div class="t" style="left:402.20px;top:339.8px;font-size:8.3px;color:#666;transform:scaleX(0.88);transform-origin:0 0">04</div><div style="position:absolute;left:441.40px;top:339.00px;width:1.00px;height:4.00px;background:#d9d9d9;"></div><div class="t" style="left:444.80px;top:339.8px;font-size:8.3px;color:#666;transform:scaleX(0.88);transform-origin:0 0">05</div><div style="position:absolute;left:484.00px;top:339.00px;width:1.00px;height:4.00px;background:#d9d9d9;"></div><div class="t" style="left:487.40px;top:339.8px;font-size:8.3px;color:#666;transform:scaleX(0.88);transform-origin:0 0">06</div><div style="position:absolute;left:526.60px;top:339.00px;width:1.00px;height:4.00px;background:#d9d9d9;"></div><div class="t" style="left:530.00px;top:339.8px;font-size:8.3px;color:#666;transform:scaleX(0.88);transform-origin:0 0">07</div><div style="position:absolute;left:569.20px;top:339.00px;width:1.00px;height:4.00px;background:#d9d9d9;"></div><div class="t" style="left:572.60px;top:339.8px;font-size:8.3px;color:#666;transform:scaleX(0.88);transform-origin:0 0">08</div><div style="position:absolute;left:611.80px;top:339.00px;width:1.00px;height:4.00px;background:#d9d9d9;"></div><div class="t" style="left:615.20px;top:339.8px;font-size:8.3px;color:#666;transform:scaleX(0.88);transform-origin:0 0">09</div><div style="position:absolute;left:654.40px;top:339.00px;width:1.00px;height:4.00px;background:#d9d9d9;"></div><div class="t" style="left:657.80px;top:339.8px;font-size:8.3px;color:#666;transform:scaleX(0.88);transform-origin:0 0">10</div><div style="position:absolute;left:697.00px;top:339.00px;width:1.00px;height:4.00px;background:#d9d9d9;"></div><div class="t" style="left:700.40px;top:339.8px;font-size:8.3px;color:#666;transform:scaleX(0.88);transform-origin:0 0">11</div><div style="position:absolute;left:739.60px;top:339.00px;width:1.00px;height:4.00px;background:#d9d9d9;"></div><div class="t" style="left:743.00px;top:339.8px;font-size:8.3px;color:#666;transform:scaleX(0.88);transform-origin:0 0">12</div><div style="position:absolute;left:782.20px;top:339.00px;width:1.00px;height:4.00px;background:#d9d9d9;"></div><div class="t" style="left:785.60px;top:339.8px;font-size:8.3px;color:#666;transform:scaleX(0.88);transform-origin:0 0">14</div><div style="position:absolute;left:824.80px;top:339.00px;width:1.00px;height:4.00px;background:#d9d9d9;"></div><div class="t" style="left:828.20px;top:339.8px;font-size:8.3px;color:#666;transform:scaleX(0.88);transform-origin:0 0">14</div><div style="position:absolute;left:867.40px;top:339.00px;width:1.00px;height:4.00px;background:#d9d9d9;"></div><div class="t" style="left:870.80px;top:339.8px;font-size:8.3px;color:#666;transform:scaleX(0.88);transform-origin:0 0">15</div><div style="position:absolute;left:910.00px;top:339.00px;width:1.00px;height:4.00px;background:#d9d9d9;"></div><div class="t" style="left:913.40px;top:339.8px;font-size:8.3px;color:#666;transform:scaleX(0.88);transform-origin:0 0">16</div><div style="position:absolute;left:952.60px;top:339.00px;width:1.00px;height:4.00px;background:#d9d9d9;"></div><div class="t" style="left:956.00px;top:339.8px;font-size:8.3px;color:#666;transform:scaleX(0.88);transform-origin:0 0">17</div><div style="position:absolute;left:995.20px;top:339.00px;width:1.00px;height:4.00px;background:#d9d9d9;"></div><div class="t" style="left:998.60px;top:339.8px;font-size:8.3px;color:#666;transform:scaleX(0.88);transform-origin:0 0">18</div><div style="position:absolute;left:1037.80px;top:339.00px;width:1.00px;height:4.00px;background:#d9d9d9;"></div><div class="t" style="left:1041.20px;top:339.8px;font-size:8.3px;color:#666;transform:scaleX(0.88);transform-origin:0 0">19</div><div style="position:absolute;left:1080.40px;top:339.00px;width:1.00px;height:4.00px;background:#d9d9d9;"></div><div class="t" style="left:1083.80px;top:339.8px;font-size:8.3px;color:#666;transform:scaleX(0.88);transform-origin:0 0">20</div><div style="position:absolute;left:1123.00px;top:339.00px;width:1.00px;height:4.00px;background:#d9d9d9;"></div><div class="t" style="left:1126.40px;top:339.8px;font-size:8.3px;color:#666;transform:scaleX(0.88);transform-origin:0 0">21</div><div style="position:absolute;left:1165.60px;top:339.00px;width:1.00px;height:4.00px;background:#d9d9d9;"></div><div class="t" style="left:1169.00px;top:339.8px;font-size:8.3px;color:#666;transform:scaleX(0.88);transform-origin:0 0">22</div><div style="position:absolute;left:1208.20px;top:339.00px;width:1.00px;height:4.00px;background:#d9d9d9;"></div><div class="t" style="left:1211.60px;top:339.8px;font-size:8.3px;color:#666;transform:scaleX(0.88);transform-origin:0 0">23</div><div style="position:absolute;left:23.00px;top:350.00px;width:1228.00px;height:1.00px;background:#dddddd;"></div><div style="position:absolute;left:23.00px;top:351.00px;width:1228.00px;height:41.00px;background:#f4f4f4;"></div><div class="t" style="left:32.5px;top:366px;font-size:9px;color:#555">2014-09-06</div><svg class="a" style="left:82px;top:367px" width="6" height="9" viewBox="0 0 6 9"><path d="M1.2 1 L4.6 4.5 L1.2 8" fill="none" stroke="#444" stroke-width="1.5"/></svg><div style="position:absolute;left:356.25px;top:373.40px;width:894.75px;height:7.60px;background:#d6eefa;"></div><div style="position:absolute;left:921.50px;top:354.00px;width:1.00px;height:27.00px;background:#7f9f1f;"></div><div style="position:absolute;left:922.25px;top:351.00px;width:164.50px;height:30.00px;background:#6b52a3;"></div><div style="position:absolute;left:1118.00px;top:351.00px;width:2.00px;height:30.00px;background:#6b52a3;"></div><div style="position:absolute;left:1146.00px;top:351.00px;width:1.00px;height:30.00px;background:#7a67b3;"></div><div style="position:absolute;left:1166.00px;top:351.00px;width:1.00px;height:30.00px;background:#7a67b3;"></div><div style="position:absolute;left:1167.00px;top:358.50px;width:19.25px;height:22.50px;background:#7f9f1f;"></div><div style="position:absolute;left:1249.50px;top:351.00px;width:1.50px;height:30.00px;background:#7a67b3;"></div><div style="position:absolute;left:228.40px;top:381.00px;width:1022.60px;height:1.00px;background:#dcdcdc;"></div><div style="position:absolute;left:228.40px;top:381.00px;width:1.00px;height:4.00px;background:#d9d9d9;"></div><div class="t" style="left:231.80px;top:381.8px;font-size:8.3px;color:#666;transform:scaleX(0.88);transform-origin:0 0">00</div><div style="position:absolute;left:271.00px;top:381.00px;width:1.00px;height:4.00px;background:#d9d9d9;"></div><div class="t" style="left:274.40px;top:381.8px;font-size:8.3px;color:#666;transform:scaleX(0.88);transform-origin:0 0">01</div><div style="position:absolute;left:313.60px;top:381.00px;width:1.00px;height:4.00px;background:#d9d9d9;"></div><div class="t" style="left:317.00px;top:381.8px;font-size:8.3px;color:#666;transform:scaleX(0.88);transform-origin:0 0">02</div><div style="position:absolute;left:356.20px;top:381.00px;width:1.00px;height:4.00px;background:#d9d9d9;"></div><div class="t" style="left:359.60px;top:381.8px;font-size:8.3px;color:#666;transform:scaleX(0.88);transform-origin:0 0">03</div><div style="position:absolute;left:398.80px;top:381.00px;width:1.00px;height:4.00px;background:#d9d9d9;"></div><div class="t" style="left:402.20px;top:381.8px;font-size:8.3px;color:#666;transform:scaleX(0.88);transform-origin:0 0">04</div><div style="position:absolute;left:441.40px;top:381.00px;width:1.00px;height:4.00px;background:#d9d9d9;"></div><div class="t" style="left:444.80px;top:381.8px;font-size:8.3px;color:#666;transform:scaleX(0.88);transform-origin:0 0">05</div><div style="position:absolute;left:484.00px;top:381.00px;width:1.00px;height:4.00px;background:#d9d9d9;"></div><div class="t" style="left:487.40px;top:381.8px;font-size:8.3px;color:#666;transform:scaleX(0.88);transform-origin:0 0">06</div><div style="position:absolute;left:526.60px;top:381.00px;width:1.00px;height:4.00px;background:#d9d9d9;"></div><div class="t" style="left:530.00px;top:381.8px;font-size:8.3px;color:#666;transform:scaleX(0.88);transform-origin:0 0">07</div><div style="position:absolute;left:569.20px;top:381.00px;width:1.00px;height:4.00px;background:#d9d9d9;"></div><div class="t" style="left:572.60px;top:381.8px;font-size:8.3px;color:#666;transform:scaleX(0.88);transform-origin:0 0">08</div><div style="position:absolute;left:611.80px;top:381.00px;width:1.00px;height:4.00px;background:#d9d9d9;"></div><div class="t" style="left:615.20px;top:381.8px;font-size:8.3px;color:#666;transform:scaleX(0.88);transform-origin:0 0">09</div><div style="position:absolute;left:654.40px;top:381.00px;width:1.00px;height:4.00px;background:#d9d9d9;"></div><div class="t" style="left:657.80px;top:381.8px;font-size:8.3px;color:#666;transform:scaleX(0.88);transform-origin:0 0">10</div><div style="position:absolute;left:697.00px;top:381.00px;width:1.00px;height:4.00px;background:#d9d9d9;"></div><div class="t" style="left:700.40px;top:381.8px;font-size:8.3px;color:#666;transform:scaleX(0.88);transform-origin:0 0">11</div><div style="position:absolute;left:739.60px;top:381.00px;width:1.00px;height:4.00px;background:#d9d9d9;"></div><div class="t" style="left:743.00px;top:381.8px;font-size:8.3px;color:#666;transform:scaleX(0.88);transform-origin:0 0">12</div><div style="position:absolute;left:782.20px;top:381.00px;width:1.00px;height:4.00px;background:#d9d9d9;"></div><div class="t" style="left:785.60px;top:381.8px;font-size:8.3px;color:#666;transform:scaleX(0.88);transform-origin:0 0">14</div><div style="position:absolute;left:824.80px;top:381.00px;width:1.00px;height:4.00px;background:#d9d9d9;"></div><div class="t" style="left:828.20px;top:381.8px;font-size:8.3px;color:#666;transform:scaleX(0.88);transform-origin:0 0">14</div><div style="position:absolute;left:867.40px;top:381.00px;width:1.00px;height:4.00px;background:#d9d9d9;"></div><div class="t" style="left:870.80px;top:381.8px;font-size:8.3px;color:#666;transform:scaleX(0.88);transform-origin:0 0">15</div><div style="position:absolute;left:910.00px;top:381.00px;width:1.00px;height:4.00px;background:#d9d9d9;"></div><div class="t" style="left:913.40px;top:381.8px;font-size:8.3px;color:#666;transform:scaleX(0.88);transform-origin:0 0">16</div><div style="position:absolute;left:952.60px;top:381.00px;width:1.00px;height:4.00px;background:#d9d9d9;"></div><div class="t" style="left:956.00px;top:381.8px;font-size:8.3px;color:#666;transform:scaleX(0.88);transform-origin:0 0">17</div><div style="position:absolute;left:995.20px;top:381.00px;width:1.00px;height:4.00px;background:#d9d9d9;"></div><div class="t" style="left:998.60px;top:381.8px;font-size:8.3px;color:#666;transform:scaleX(0.88);transform-origin:0 0">18</div><div style="position:absolute;left:1037.80px;top:381.00px;width:1.00px;height:4.00px;background:#d9d9d9;"></div><div class="t" style="left:1041.20px;top:381.8px;font-size:8.3px;color:#666;transform:scaleX(0.88);transform-origin:0 0">19</div><div style="position:absolute;left:1080.40px;top:381.00px;width:1.00px;height:4.00px;background:#d9d9d9;"></div><div class="t" style="left:1083.80px;top:381.8px;font-size:8.3px;color:#666;transform:scaleX(0.88);transform-origin:0 0">20</div><div style="position:absolute;left:1123.00px;top:381.00px;width:1.00px;height:4.00px;background:#d9d9d9;"></div><div class="t" style="left:1126.40px;top:381.8px;font-size:8.3px;color:#666;transform:scaleX(0.88);transform-origin:0 0">21</div><div style="position:absolute;left:1165.60px;top:381.00px;width:1.00px;height:4.00px;background:#d9d9d9;"></div><div class="t" style="left:1169.00px;top:381.8px;font-size:8.3px;color:#666;transform:scaleX(0.88);transform-origin:0 0">22</div><div style="position:absolute;left:1208.20px;top:381.00px;width:1.00px;height:4.00px;background:#d9d9d9;"></div><div class="t" style="left:1211.60px;top:381.8px;font-size:8.3px;color:#666;transform:scaleX(0.88);transform-origin:0 0">23</div><div style="position:absolute;left:23.00px;top:392.00px;width:1228.00px;height:1.00px;background:#dddddd;"></div><div style="position:absolute;left:23.00px;top:393.00px;width:1228.00px;height:41.00px;background:#ffffff;"></div><div class="t" style="left:32.5px;top:408px;font-size:9px;color:#555">2014-09-07</div><svg class="a" style="left:82px;top:409px" width="6" height="9" viewBox="0 0 6 9"><path d="M1.2 1 L4.6 4.5 L1.2 8" fill="none" stroke="#444" stroke-width="1.5"/></svg><div style="position:absolute;left:228.40px;top:415.40px;width:1022.60px;height:7.60px;background:#d6eefa;"></div><div style="position:absolute;left:233.00px;top:393.00px;width:2.50px;height:30.00px;background:#6b52a3;"></div><div style="position:absolute;left:292.00px;top:393.00px;width:1.00px;height:30.00px;background:#a99bd0;"></div><div style="position:absolute;left:363.00px;top:393.00px;width:1.00px;height:30.00px;background:#7a67b3;"></div><div style="position:absolute;left:750.50px;top:393.00px;width:1.00px;height:30.00px;background:#7a67b3;"></div><div style="position:absolute;left:751.25px;top:400.50px;width:1.75px;height:22.50px;background:#7f9f1f;"></div><div style="position:absolute;left:798.00px;top:393.00px;width:1.00px;height:30.00px;background:#7a67b3;"></div><div style="position:absolute;left:799.00px;top:400.50px;width:2.00px;height:22.50px;background:#7f9f1f;"></div><div style="position:absolute;left:810.00px;top:393.00px;width:1.00px;height:30.00px;background:#7a67b3;"></div><div style="position:absolute;left:813.00px;top:393.00px;width:1.00px;height:30.00px;background:#7a67b3;"></div><div style="position:absolute;left:895.00px;top:393.00px;width:1.50px;height:30.00px;background:#7a67b3;"></div><div style="position:absolute;left:1017.00px;top:393.00px;width:2.50px;height:30.00px;background:#6b52a3;"></div><div style="position:absolute;left:1021.00px;top:393.00px;width:1.00px;height:30.00px;background:#7a67b3;"></div><div style="position:absolute;left:1022.50px;top:400.50px;width:2.00px;height:22.50px;background:#7f9f1f;"></div><div style="position:absolute;left:1027.50px;top:393.00px;width:1.00px;height:30.00px;background:#7a67b3;"></div><div style="position:absolute;left:1055.25px;top:393.00px;width:18.75px;height:30.00px;background:#6b52a3;"></div><div style="position:absolute;left:1087.00px;top:393.00px;width:108.60px;height:30.00px;background:#6b52a3;"></div><div style="position:absolute;left:1219.00px;top:393.00px;width:32.00px;height:30.00px;background:#6b52a3;"></div><div style="position:absolute;left:228.40px;top:423.00px;width:1022.60px;height:1.00px;background:#dcdcdc;"></div><div style="position:absolute;left:228.40px;top:423.00px;width:1.00px;height:4.00px;background:#d9d9d9;"></div><div class="t" style="left:231.80px;top:423.8px;font-size:8.3px;color:#666;transform:scaleX(0.88);transform-origin:0 0">00</div><div style="position:absolute;left:271.00px;top:423.00px;width:1.00px;height:4.00px;background:#d9d9d9;"></div><div class="t" style="left:274.40px;top:423.8px;font-size:8.3px;color:#666;transform:scaleX(0.88);transform-origin:0 0">01</div><div style="position:absolute;left:313.60px;top:423.00px;width:1.00px;height:4.00px;background:#d9d9d9;"></div><div class="t" style="left:317.00px;top:423.8px;font-size:8.3px;color:#666;transform:scaleX(0.88);transform-origin:0 0">02</div><div style="position:absolute;left:356.20px;top:423.00px;width:1.00px;height:4.00px;background:#d9d9d9;"></div><div class="t" style="left:359.60px;top:423.8px;font-size:8.3px;color:#666;transform:scaleX(0.88);transform-origin:0 0">03</div><div style="position:absolute;left:398.80px;top:423.00px;width:1.00px;height:4.00px;background:#d9d9d9;"></div><div class="t" style="left:402.20px;top:423.8px;font-size:8.3px;color:#666;transform:scaleX(0.88);transform-origin:0 0">04</div><div style="position:absolute;left:441.40px;top:423.00px;width:1.00px;height:4.00px;background:#d9d9d9;"></div><div class="t" style="left:444.80px;top:423.8px;font-size:8.3px;color:#666;transform:scaleX(0.88);transform-origin:0 0">05</div><div style="position:absolute;left:484.00px;top:423.00px;width:1.00px;height:4.00px;background:#d9d9d9;"></div><div class="t" style="left:487.40px;top:423.8px;font-size:8.3px;color:#666;transform:scaleX(0.88);transform-origin:0 0">06</div><div style="position:absolute;left:526.60px;top:423.00px;width:1.00px;height:4.00px;background:#d9d9d9;"></div><div class="t" style="left:530.00px;top:423.8px;font-size:8.3px;color:#666;transform:scaleX(0.88);transform-origin:0 0">07</div><div style="position:absolute;left:569.20px;top:423.00px;width:1.00px;height:4.00px;background:#d9d9d9;"></div><div class="t" style="left:572.60px;top:423.8px;font-size:8.3px;color:#666;transform:scaleX(0.88);transform-origin:0 0">08</div><div style="position:absolute;left:611.80px;top:423.00px;width:1.00px;height:4.00px;background:#d9d9d9;"></div><div class="t" style="left:615.20px;top:423.8px;font-size:8.3px;color:#666;transform:scaleX(0.88);transform-origin:0 0">09</div><div style="position:absolute;left:654.40px;top:423.00px;width:1.00px;height:4.00px;background:#d9d9d9;"></div><div class="t" style="left:657.80px;top:423.8px;font-size:8.3px;color:#666;transform:scaleX(0.88);transform-origin:0 0">10</div><div style="position:absolute;left:697.00px;top:423.00px;width:1.00px;height:4.00px;background:#d9d9d9;"></div><div class="t" style="left:700.40px;top:423.8px;font-size:8.3px;color:#666;transform:scaleX(0.88);transform-origin:0 0">11</div><div style="position:absolute;left:739.60px;top:423.00px;width:1.00px;height:4.00px;background:#d9d9d9;"></div><div class="t" style="left:743.00px;top:423.8px;font-size:8.3px;color:#666;transform:scaleX(0.88);transform-origin:0 0">12</div><div style="position:absolute;left:782.20px;top:423.00px;width:1.00px;height:4.00px;background:#d9d9d9;"></div><div class="t" style="left:785.60px;top:423.8px;font-size:8.3px;color:#666;transform:scaleX(0.88);transform-origin:0 0">14</div><div style="position:absolute;left:824.80px;top:423.00px;width:1.00px;height:4.00px;background:#d9d9d9;"></div><div class="t" style="left:828.20px;top:423.8px;font-size:8.3px;color:#666;transform:scaleX(0.88);transform-origin:0 0">14</div><div style="position:absolute;left:867.40px;top:423.00px;width:1.00px;height:4.00px;background:#d9d9d9;"></div><div class="t" style="left:870.80px;top:423.8px;font-size:8.3px;color:#666;transform:scaleX(0.88);transform-origin:0 0">15</div><div style="position:absolute;left:910.00px;top:423.00px;width:1.00px;height:4.00px;background:#d9d9d9;"></div><div class="t" style="left:913.40px;top:423.8px;font-size:8.3px;color:#666;transform:scaleX(0.88);transform-origin:0 0">16</div><div style="position:absolute;left:952.60px;top:423.00px;width:1.00px;height:4.00px;background:#d9d9d9;"></div><div class="t" style="left:956.00px;top:423.8px;font-size:8.3px;color:#666;transform:scaleX(0.88);transform-origin:0 0">17</div><div style="position:absolute;left:995.20px;top:423.00px;width:1.00px;height:4.00px;background:#d9d9d9;"></div><div class="t" style="left:998.60px;top:423.8px;font-size:8.3px;color:#666;transform:scaleX(0.88);transform-origin:0 0">18</div><div style="position:absolute;left:1037.80px;top:423.00px;width:1.00px;height:4.00px;background:#d9d9d9;"></div><div class="t" style="left:1041.20px;top:423.8px;font-size:8.3px;color:#666;transform:scaleX(0.88);transform-origin:0 0">19</div><div style="position:absolute;left:1080.40px;top:423.00px;width:1.00px;height:4.00px;background:#d9d9d9;"></div><div class="t" style="left:1083.80px;top:423.8px;font-size:8.3px;color:#666;transform:scaleX(0.88);transform-origin:0 0">20</div><div style="position:absolute;left:1123.00px;top:423.00px;width:1.00px;height:4.00px;background:#d9d9d9;"></div><div class="t" style="left:1126.40px;top:423.8px;font-size:8.3px;color:#666;transform:scaleX(0.88);transform-origin:0 0">21</div><div style="position:absolute;left:1165.60px;top:423.00px;width:1.00px;height:4.00px;background:#d9d9d9;"></div><div class="t" style="left:1169.00px;top:423.8px;font-size:8.3px;color:#666;transform:scaleX(0.88);transform-origin:0 0">22</div><div style="position:absolute;left:1208.20px;top:423.00px;width:1.00px;height:4.00px;background:#d9d9d9;"></div><div class="t" style="left:1211.60px;top:423.8px;font-size:8.3px;color:#666;transform:scaleX(0.88);transform-origin:0 0">23</div><div style="position:absolute;left:23.00px;top:434.00px;width:1228.00px;height:1.00px;background:#dddddd;"></div><div style="position:absolute;left:23.00px;top:435.00px;width:1228.00px;height:41.00px;background:#f4f4f4;"></div><div class="t" style="left:32.5px;top:450px;font-size:9px;color:#555">2014-09-08</div><svg class="a" style="left:82px;top:451px" width="6" height="9" viewBox="0 0 6 9"><path d="M1.2 1 L4.6 4.5 L1.2 8" fill="none" stroke="#444" stroke-width="1.5"/></svg><div style="position:absolute;left:228.40px;top:457.40px;width:1022.60px;height:7.60px;background:#d6eefa;"></div><div style="position:absolute;left:228.40px;top:435.00px;width:4.10px;height:30.00px;background:#6b52a3;"></div><div style="position:absolute;left:633.00px;top:435.00px;width:152.00px;height:30.00px;background:#6b52a3;"></div><div style="position:absolute;left:825.00px;top:435.00px;width:26.75px;height:30.00px;background:#6b52a3;"></div><div style="position:absolute;left:858.75px;top:435.00px;width:33.00px;height:30.00px;background:#6b52a3;"></div><div style="position:absolute;left:898.00px;top:435.00px;width:1.00px;height:30.00px;background:#a99bd0;"></div><div style="position:absolute;left:945.00px;top:435.00px;width:2.75px;height:30.00px;background:#6b52a3;"></div><div style="position:absolute;left:950.00px;top:435.00px;width:1.00px;height:30.00px;background:#7a67b3;"></div><div style="position:absolute;left:985.00px;top:435.00px;width:15.50px;height:30.00px;background:#6b52a3;"></div><div style="position:absolute;left:1003.75px;top:435.00px;width:23.50px;height:30.00px;background:#6b52a3;"></div><div style="position:absolute;left:1105.00px;top:435.00px;width:1.00px;height:30.00px;background:#a99bd0;"></div><div style="position:absolute;left:1132.00px;top:435.00px;width:90.40px;height:30.00px;background:#6b52a3;"></div><div style="position:absolute;left:1222.50px;top:438.00px;width:1.00px;height:27.00px;background:#7f9f1f;"></div><div style="position:absolute;left:228.40px;top:465.00px;width:1022.60px;height:1.00px;background:#dcdcdc;"></div><div style="position:absolute;left:228.40px;top:465.00px;width:1.00px;height:4.00px;background:#d9d9d9;"></div><div class="t" style="left:231.80px;top:465.8px;font-size:8.3px;color:#666;transform:scaleX(0.88);transform-origin:0 0">00</div><div style="position:absolute;left:271.00px;top:465.00px;width:1.00px;height:4.00px;background:#d9d9d9;"></div><div class="t" style="left:274.40px;top:465.8px;font-size:8.3px;color:#666;transform:scaleX(0.88);transform-origin:0 0">01</div><div style="position:absolute;left:313.60px;top:465.00px;width:1.00px;height:4.00px;background:#d9d9d9;"></div><div class="t" style="left:317.00px;top:465.8px;font-size:8.3px;color:#666;transform:scaleX(0.88);transform-origin:0 0">02</div><div style="position:absolute;left:356.20px;top:465.00px;width:1.00px;height:4.00px;background:#d9d9d9;"></div><div class="t" style="left:359.60px;top:465.8px;font-size:8.3px;color:#666;transform:scaleX(0.88);transform-origin:0 0">03</div><div style="position:absolute;left:398.80px;top:465.00px;width:1.00px;height:4.00px;background:#d9d9d9;"></div><div class="t" style="left:402.20px;top:465.8px;font-size:8.3px;color:#666;transform:scaleX(0.88);transform-origin:0 0">04</div><div style="position:absolute;left:441.40px;top:465.00px;width:1.00px;height:4.00px;background:#d9d9d9;"></div><div class="t" style="left:444.80px;top:465.8px;font-size:8.3px;color:#666;transform:scaleX(0.88);transform-origin:0 0">05</div><div style="position:absolute;left:484.00px;top:465.00px;width:1.00px;height:4.00px;background:#d9d9d9;"></div><div class="t" style="left:487.40px;top:465.8px;font-size:8.3px;color:#666;transform:scaleX(0.88);transform-origin:0 0">06</div><div style="position:absolute;left:526.60px;top:465.00px;width:1.00px;height:4.00px;background:#d9d9d9;"></div><div class="t" style="left:530.00px;top:465.8px;font-size:8.3px;color:#666;transform:scaleX(0.88);transform-origin:0 0">07</div><div style="position:absolute;left:569.20px;top:465.00px;width:1.00px;height:4.00px;background:#d9d9d9;"></div><div class="t" style="left:572.60px;top:465.8px;font-size:8.3px;color:#666;transform:scaleX(0.88);transform-origin:0 0">08</div><div style="position:absolute;left:611.80px;top:465.00px;width:1.00px;height:4.00px;background:#d9d9d9;"></div><div class="t" style="left:615.20px;top:465.8px;font-size:8.3px;color:#666;transform:scaleX(0.88);transform-origin:0 0">09</div><div style="position:absolute;left:654.40px;top:465.00px;width:1.00px;height:4.00px;background:#d9d9d9;"></div><div class="t" style="left:657.80px;top:465.8px;font-size:8.3px;color:#666;transform:scaleX(0.88);transform-origin:0 0">10</div><div style="position:absolute;left:697.00px;top:465.00px;width:1.00px;height:4.00px;background:#d9d9d9;"></div><div class="t" style="left:700.40px;top:465.8px;font-size:8.3px;color:#666;transform:scaleX(0.88);transform-origin:0 0">11</div><div style="position:absolute;left:739.60px;top:465.00px;width:1.00px;height:4.00px;background:#d9d9d9;"></div><div class="t" style="left:743.00px;top:465.8px;font-size:8.3px;color:#666;transform:scaleX(0.88);transform-origin:0 0">12</div><div style="position:absolute;left:782.20px;top:465.00px;width:1.00px;height:4.00px;background:#d9d9d9;"></div><div class="t" style="left:785.60px;top:465.8px;font-size:8.3px;color:#666;transform:scaleX(0.88);transform-origin:0 0">14</div><div style="position:absolute;left:824.80px;top:465.00px;width:1.00px;height:4.00px;background:#d9d9d9;"></div><div class="t" style="left:828.20px;top:465.8px;font-size:8.3px;color:#666;transform:scaleX(0.88);transform-origin:0 0">14</div><div style="position:absolute;left:867.40px;top:465.00px;width:1.00px;height:4.00px;background:#d9d9d9;"></div><div class="t" style="left:870.80px;top:465.8px;font-size:8.3px;color:#666;transform:scaleX(0.88);transform-origin:0 0">15</div><div style="position:absolute;left:910.00px;top:465.00px;width:1.00px;height:4.00px;background:#d9d9d9;"></div><div class="t" style="left:913.40px;top:465.8px;font-size:8.3px;color:#666;transform:scaleX(0.88);transform-origin:0 0">16</div><div style="position:absolute;left:952.60px;top:465.00px;width:1.00px;height:4.00px;background:#d9d9d9;"></div><div class="t" style="left:956.00px;top:465.8px;font-size:8.3px;color:#666;transform:scaleX(0.88);transform-origin:0 0">17</div><div style="position:absolute;left:995.20px;top:465.00px;width:1.00px;height:4.00px;background:#d9d9d9;"></div><div class="t" style="left:998.60px;top:465.8px;font-size:8.3px;color:#666;transform:scaleX(0.88);transform-origin:0 0">18</div><div style="position:absolute;left:1037.80px;top:465.00px;width:1.00px;height:4.00px;background:#d9d9d9;"></div><div class="t" style="left:1041.20px;top:465.8px;font-size:8.3px;color:#666;transform:scaleX(0.88);transform-origin:0 0">19</div><div style="position:absolute;left:1080.40px;top:465.00px;width:1.00px;height:4.00px;background:#d9d9d9;"></div><div class="t" style="left:1083.80px;top:465.8px;font-size:8.3px;color:#666;transform:scaleX(0.88);transform-origin:0 0">20</div><div style="position:absolute;left:1123.00px;top:465.00px;width:1.00px;height:4.00px;background:#d9d9d9;"></div><div class="t" style="left:1126.40px;top:465.8px;font-size:8.3px;color:#666;transform:scaleX(0.88);transform-origin:0 0">21</div><div style="position:absolute;left:1165.60px;top:465.00px;width:1.00px;height:4.00px;background:#d9d9d9;"></div><div class="t" style="left:1169.00px;top:465.8px;font-size:8.3px;color:#666;transform:scaleX(0.88);transform-origin:0 0">22</div><div style="position:absolute;left:1208.20px;top:465.00px;width:1.00px;height:4.00px;background:#d9d9d9;"></div><div class="t" style="left:1211.60px;top:465.8px;font-size:8.3px;color:#666;transform:scaleX(0.88);transform-origin:0 0">23</div><div style="position:absolute;left:23.00px;top:476.00px;width:1228.00px;height:1.00px;background:#dddddd;"></div><div style="position:absolute;left:23.00px;top:477.00px;width:1228.00px;height:41.00px;background:#ffffff;"></div><div class="t" style="left:32.5px;top:492px;font-size:9px;color:#555">2014-09-09</div><svg class="a" style="left:82px;top:493px" width="6" height="9" viewBox="0 0 6 9"><path d="M1.2 1 L4.6 4.5 L1.2 8" fill="none" stroke="#444" stroke-width="1.5"/></svg><div style="position:absolute;left:228.40px;top:499.40px;width:1022.60px;height:7.60px;background:#d6eefa;"></div><div style="position:absolute;left:586.00px;top:480.00px;width:1.00px;height:27.00px;background:#7f9f1f;"></div><div style="position:absolute;left:587.00px;top:477.00px;width:93.75px;height:30.00px;background:#6b52a3;"></div><div style="position:absolute;left:682.50px;top:477.00px;width:5.50px;height:30.00px;background:#6b52a3;"></div><div style="position:absolute;left:689.50px;top:477.00px;width:1.00px;height:30.00px;background:#7a67b3;"></div><div style="position:absolute;left:694.00px;top:477.00px;width:1.00px;height:30.00px;background:#7a67b3;"></div><div style="position:absolute;left:696.75px;top:477.00px;width:62.25px;height:30.00px;background:#6b52a3;"></div><div style="position:absolute;left:794.25px;top:477.00px;width:160.75px;height:30.00px;background:#6b52a3;"></div><div style="position:absolute;left:960.00px;top:477.00px;width:1.00px;height:30.00px;background:#7a67b3;"></div><div style="position:absolute;left:964.50px;top:477.00px;width:1.50px;height:30.00px;background:#7a67b3;"></div><div style="position:absolute;left:1015.00px;top:477.00px;width:1.50px;height:30.00px;background:#7a67b3;"></div><div style="position:absolute;left:1075.00px;top:477.00px;width:1.50px;height:30.00px;background:#7a67b3;"></div><div style="position:absolute;left:228.40px;top:507.00px;width:1022.60px;height:1.00px;background:#dcdcdc;"></div><div style="position:absolute;left:228.40px;top:507.00px;width:1.00px;height:4.00px;background:#d9d9d9;"></div><div class="t" style="left:231.80px;top:507.8px;font-size:8.3px;color:#666;transform:scaleX(0.88);transform-origin:0 0">00</div><div style="position:absolute;left:271.00px;top:507.00px;width:1.00px;height:4.00px;background:#d9d9d9;"></div><div class="t" style="left:274.40px;top:507.8px;font-size:8.3px;color:#666;transform:scaleX(0.88);transform-origin:0 0">01</div><div style="position:absolute;left:313.60px;top:507.00px;width:1.00px;height:4.00px;background:#d9d9d9;"></div><div class="t" style="left:317.00px;top:507.8px;font-size:8.3px;color:#666;transform:scaleX(0.88);transform-origin:0 0">02</div><div style="position:absolute;left:356.20px;top:507.00px;width:1.00px;height:4.00px;background:#d9d9d9;"></div><div class="t" style="left:359.60px;top:507.8px;font-size:8.3px;color:#666;transform:scaleX(0.88);transform-origin:0 0">03</div><div style="position:absolute;left:398.80px;top:507.00px;width:1.00px;height:4.00px;background:#d9d9d9;"></div><div class="t" style="left:402.20px;top:507.8px;font-size:8.3px;color:#666;transform:scaleX(0.88);transform-origin:0 0">04</div><div style="position:absolute;left:441.40px;top:507.00px;width:1.00px;height:4.00px;background:#d9d9d9;"></div><div class="t" style="left:444.80px;top:507.8px;font-size:8.3px;color:#666;transform:scaleX(0.88);transform-origin:0 0">05</div><div style="position:absolute;left:484.00px;top:507.00px;width:1.00px;height:4.00px;background:#d9d9d9;"></div><div class="t" style="left:487.40px;top:507.8px;font-size:8.3px;color:#666;transform:scaleX(0.88);transform-origin:0 0">06</div><div style="position:absolute;left:526.60px;top:507.00px;width:1.00px;height:4.00px;background:#d9d9d9;"></div><div class="t" style="left:530.00px;top:507.8px;font-size:8.3px;color:#666;transform:scaleX(0.88);transform-origin:0 0">07</div><div style="position:absolute;left:569.20px;top:507.00px;width:1.00px;height:4.00px;background:#d9d9d9;"></div><div class="t" style="left:572.60px;top:507.8px;font-size:8.3px;color:#666;transform:scaleX(0.88);transform-origin:0 0">08</div><div style="position:absolute;left:611.80px;top:507.00px;width:1.00px;height:4.00px;background:#d9d9d9;"></div><div class="t" style="left:615.20px;top:507.8px;font-size:8.3px;color:#666;transform:scaleX(0.88);transform-origin:0 0">09</div><div style="position:absolute;left:654.40px;top:507.00px;width:1.00px;height:4.00px;background:#d9d9d9;"></div><div class="t" style="left:657.80px;top:507.8px;font-size:8.3px;color:#666;transform:scaleX(0.88);transform-origin:0 0">10</div><div style="position:absolute;left:697.00px;top:507.00px;width:1.00px;height:4.00px;background:#d9d9d9;"></div><div class="t" style="left:700.40px;top:507.8px;font-size:8.3px;color:#666;transform:scaleX(0.88);transform-origin:0 0">11</div><div style="position:absolute;left:739.60px;top:507.00px;width:1.00px;height:4.00px;background:#d9d9d9;"></div><div class="t" style="left:743.00px;top:507.8px;font-size:8.3px;color:#666;transform:scaleX(0.88);transform-origin:0 0">12</div><div style="position:absolute;left:782.20px;top:507.00px;width:1.00px;height:4.00px;background:#d9d9d9;"></div><div class="t" style="left:785.60px;top:507.8px;font-size:8.3px;color:#666;transform:scaleX(0.88);transform-origin:0 0">14</div><div style="position:absolute;left:824.80px;top:507.00px;width:1.00px;height:4.00px;background:#d9d9d9;"></div><div class="t" style="left:828.20px;top:507.8px;font-size:8.3px;color:#666;transform:scaleX(0.88);transform-origin:0 0">14</div><div style="position:absolute;left:867.40px;top:507.00px;width:1.00px;height:4.00px;background:#d9d9d9;"></div><div class="t" style="left:870.80px;top:507.8px;font-size:8.3px;color:#666;transform:scaleX(0.88);transform-origin:0 0">15</div><div style="position:absolute;left:910.00px;top:507.00px;width:1.00px;height:4.00px;background:#d9d9d9;"></div><div class="t" style="left:913.40px;top:507.8px;font-size:8.3px;color:#666;transform:scaleX(0.88);transform-origin:0 0">16</div><div style="position:absolute;left:952.60px;top:507.00px;width:1.00px;height:4.00px;background:#d9d9d9;"></div><div class="t" style="left:956.00px;top:507.8px;font-size:8.3px;color:#666;transform:scaleX(0.88);transform-origin:0 0">17</div><div style="position:absolute;left:995.20px;top:507.00px;width:1.00px;height:4.00px;background:#d9d9d9;"></div><div class="t" style="left:998.60px;top:507.8px;font-size:8.3px;color:#666;transform:scaleX(0.88);transform-origin:0 0">18</div><div style="position:absolute;left:1037.80px;top:507.00px;width:1.00px;height:4.00px;background:#d9d9d9;"></div><div class="t" style="left:1041.20px;top:507.8px;font-size:8.3px;color:#666;transform:scaleX(0.88);transform-origin:0 0">19</div><div style="position:absolute;left:1080.40px;top:507.00px;width:1.00px;height:4.00px;background:#d9d9d9;"></div><div class="t" style="left:1083.80px;top:507.8px;font-size:8.3px;color:#666;transform:scaleX(0.88);transform-origin:0 0">20</div><div style="position:absolute;left:1123.00px;top:507.00px;width:1.00px;height:4.00px;background:#d9d9d9;"></div><div class="t" style="left:1126.40px;top:507.8px;font-size:8.3px;color:#666;transform:scaleX(0.88);transform-origin:0 0">21</div><div style="position:absolute;left:1165.60px;top:507.00px;width:1.00px;height:4.00px;background:#d9d9d9;"></div><div class="t" style="left:1169.00px;top:507.8px;font-size:8.3px;color:#666;transform:scaleX(0.88);transform-origin:0 0">22</div><div style="position:absolute;left:1208.20px;top:507.00px;width:1.00px;height:4.00px;background:#d9d9d9;"></div><div class="t" style="left:1211.60px;top:507.8px;font-size:8.3px;color:#666;transform:scaleX(0.88);transform-origin:0 0">23</div><div style="position:absolute;left:23.00px;top:518.00px;width:1228.00px;height:1.00px;background:#dddddd;"></div><div style="position:absolute;left:23.00px;top:519.00px;width:1228.00px;height:41.00px;background:#f4f4f4;"></div><div class="t" style="left:32.5px;top:534px;font-size:9px;color:#555">2014-09-10</div><svg class="a" style="left:82px;top:535px" width="6" height="9" viewBox="0 0 6 9"><path d="M1.2 1 L4.6 4.5 L1.2 8" fill="none" stroke="#444" stroke-width="1.5"/></svg><div style="position:absolute;left:228.40px;top:541.40px;width:1022.60px;height:7.60px;background:#d6eefa;"></div><div style="position:absolute;left:1078.00px;top:519.00px;width:1.00px;height:30.00px;background:#7a67b3;"></div><div style="position:absolute;left:1080.50px;top:519.00px;width:1.50px;height:30.00px;background:#7a67b3;"></div><div style="position:absolute;left:1109.00px;top:519.00px;width:1.50px;height:30.00px;background:#7a67b3;"></div><div style="position:absolute;left:1112.00px;top:519.00px;width:1.00px;height:30.00px;background:#7a67b3;"></div><div style="position:absolute;left:1115.00px;top:519.00px;width:1.00px;height:30.00px;background:#7a67b3;"></div><div style="position:absolute;left:1140.00px;top:519.00px;width:5.75px;height:30.00px;background:#6b52a3;"></div><div style="position:absolute;left:1156.25px;top:519.00px;width:86.75px;height:30.00px;background:#6b52a3;"></div><div style="position:absolute;left:1248.75px;top:519.00px;width:2.25px;height:30.00px;background:#6b52a3;"></div><div style="position:absolute;left:228.40px;top:549.00px;width:1022.60px;height:1.00px;background:#dcdcdc;"></div><div style="position:absolute;left:228.40px;top:549.00px;width:1.00px;height:4.00px;background:#d9d9d9;"></div><div class="t" style="left:231.80px;top:549.8px;font-size:8.3px;color:#666;transform:scaleX(0.88);transform-origin:0 0">00</div><div style="position:absolute;left:271.00px;top:549.00px;width:1.00px;height:4.00px;background:#d9d9d9;"></div><div class="t" style="left:274.40px;top:549.8px;font-size:8.3px;color:#666;transform:scaleX(0.88);transform-origin:0 0">01</div><div style="position:absolute;left:313.60px;top:549.00px;width:1.00px;height:4.00px;background:#d9d9d9;"></div><div class="t" style="left:317.00px;top:549.8px;font-size:8.3px;color:#666;transform:scaleX(0.88);transform-origin:0 0">02</div><div style="position:absolute;left:356.20px;top:549.00px;width:1.00px;height:4.00px;background:#d9d9d9;"></div><div class="t" style="left:359.60px;top:549.8px;font-size:8.3px;color:#666;transform:scaleX(0.88);transform-origin:0 0">03</div><div style="position:absolute;left:398.80px;top:549.00px;width:1.00px;height:4.00px;background:#d9d9d9;"></div><div class="t" style="left:402.20px;top:549.8px;font-size:8.3px;color:#666;transform:scaleX(0.88);transform-origin:0 0">04</div><div style="position:absolute;left:441.40px;top:549.00px;width:1.00px;height:4.00px;background:#d9d9d9;"></div><div class="t" style="left:444.80px;top:549.8px;font-size:8.3px;color:#666;transform:scaleX(0.88);transform-origin:0 0">05</div><div style="position:absolute;left:484.00px;top:549.00px;width:1.00px;height:4.00px;background:#d9d9d9;"></div><div class="t" style="left:487.40px;top:549.8px;font-size:8.3px;color:#666;transform:scaleX(0.88);transform-origin:0 0">06</div><div style="position:absolute;left:526.60px;top:549.00px;width:1.00px;height:4.00px;background:#d9d9d9;"></div><div class="t" style="left:530.00px;top:549.8px;font-size:8.3px;color:#666;transform:scaleX(0.88);transform-origin:0 0">07</div><div style="position:absolute;left:569.20px;top:549.00px;width:1.00px;height:4.00px;background:#d9d9d9;"></div><div class="t" style="left:572.60px;top:549.8px;font-size:8.3px;color:#666;transform:scaleX(0.88);transform-origin:0 0">08</div><div style="position:absolute;left:611.80px;top:549.00px;width:1.00px;height:4.00px;background:#d9d9d9;"></div><div class="t" style="left:615.20px;top:549.8px;font-size:8.3px;color:#666;transform:scaleX(0.88);transform-origin:0 0">09</div><div style="position:absolute;left:654.40px;top:549.00px;width:1.00px;height:4.00px;background:#d9d9d9;"></div><div class="t" style="left:657.80px;top:549.8px;font-size:8.3px;color:#666;transform:scaleX(0.88);transform-origin:0 0">10</div><div style="position:absolute;left:697.00px;top:549.00px;width:1.00px;height:4.00px;background:#d9d9d9;"></div><div class="t" style="left:700.40px;top:549.8px;font-size:8.3px;color:#666;transform:scaleX(0.88);transform-origin:0 0">11</div><div style="position:absolute;left:739.60px;top:549.00px;width:1.00px;height:4.00px;background:#d9d9d9;"></div><div class="t" style="left:743.00px;top:549.8px;font-size:8.3px;color:#666;transform:scaleX(0.88);transform-origin:0 0">12</div><div style="position:absolute;left:782.20px;top:549.00px;width:1.00px;height:4.00px;background:#d9d9d9;"></div><div class="t" style="left:785.60px;top:549.8px;font-size:8.3px;color:#666;transform:scaleX(0.88);transform-origin:0 0">14</div><div style="position:absolute;left:824.80px;top:549.00px;width:1.00px;height:4.00px;background:#d9d9d9;"></div><div class="t" style="left:828.20px;top:549.8px;font-size:8.3px;color:#666;transform:scaleX(0.88);transform-origin:0 0">14</div><div style="position:absolute;left:867.40px;top:549.00px;width:1.00px;height:4.00px;background:#d9d9d9;"></div><div class="t" style="left:870.80px;top:549.8px;font-size:8.3px;color:#666;transform:scaleX(0.88);transform-origin:0 0">15</div><div style="position:absolute;left:910.00px;top:549.00px;width:1.00px;height:4.00px;background:#d9d9d9;"></div><div class="t" style="left:913.40px;top:549.8px;font-size:8.3px;color:#666;transform:scaleX(0.88);transform-origin:0 0">16</div><div style="position:absolute;left:952.60px;top:549.00px;width:1.00px;height:4.00px;background:#d9d9d9;"></div><div class="t" style="left:956.00px;top:549.8px;font-size:8.3px;color:#666;transform:scaleX(0.88);transform-origin:0 0">17</div><div style="position:absolute;left:995.20px;top:549.00px;width:1.00px;height:4.00px;background:#d9d9d9;"></div><div class="t" style="left:998.60px;top:549.8px;font-size:8.3px;color:#666;transform:scaleX(0.88);transform-origin:0 0">18</div><div style="position:absolute;left:1037.80px;top:549.00px;width:1.00px;height:4.00px;background:#d9d9d9;"></div><div class="t" style="left:1041.20px;top:549.8px;font-size:8.3px;color:#666;transform:scaleX(0.88);transform-origin:0 0">19</div><div style="position:absolute;left:1080.40px;top:549.00px;width:1.00px;height:4.00px;background:#d9d9d9;"></div><div class="t" style="left:1083.80px;top:549.8px;font-size:8.3px;color:#666;transform:scaleX(0.88);transform-origin:0 0">20</div><div style="position:absolute;left:1123.00px;top:549.00px;width:1.00px;height:4.00px;background:#d9d9d9;"></div><div class="t" style="left:1126.40px;top:549.8px;font-size:8.3px;color:#666;transform:scaleX(0.88);transform-origin:0 0">21</div><div style="position:absolute;left:1165.60px;top:549.00px;width:1.00px;height:4.00px;background:#d9d9d9;"></div><div class="t" style="left:1169.00px;top:549.8px;font-size:8.3px;color:#666;transform:scaleX(0.88);transform-origin:0 0">22</div><div style="position:absolute;left:1208.20px;top:549.00px;width:1.00px;height:4.00px;background:#d9d9d9;"></div><div class="t" style="left:1211.60px;top:549.8px;font-size:8.3px;color:#666;transform:scaleX(0.88);transform-origin:0 0">23</div><div style="position:absolute;left:23.00px;top:560.00px;width:1228.00px;height:1.00px;background:#dddddd;"></div><div style="position:absolute;left:23.00px;top:561.00px;width:1228.00px;height:41.00px;background:#ffffff;"></div><div class="t" style="left:32.5px;top:576px;font-size:9px;color:#555">2014-09-11</div><svg class="a" style="left:82px;top:577px" width="6" height="9" viewBox="0 0 6 9"><path d="M1.2 1 L4.6 4.5 L1.2 8" fill="none" stroke="#444" stroke-width="1.5"/></svg><div style="position:absolute;left:228.40px;top:583.40px;width:1022.60px;height:7.60px;background:#d6eefa;"></div><div style="position:absolute;left:237.00px;top:561.00px;width:5.00px;height:30.00px;background:#6b52a3;"></div><div style="position:absolute;left:242.00px;top:568.50px;width:3.00px;height:22.50px;background:#7f9f1f;"></div><div style="position:absolute;left:633.50px;top:561.00px;width:1.00px;height:30.00px;background:#7a67b3;"></div><div style="position:absolute;left:643.75px;top:561.00px;width:2.75px;height:30.00px;background:#6b52a3;"></div><div style="position:absolute;left:667.00px;top:568.50px;width:6.25px;height:22.50px;background:#7f9f1f;"></div><div style="position:absolute;left:766.00px;top:561.00px;width:1.00px;height:30.00px;background:#7a67b3;"></div><div style="position:absolute;left:767.00px;top:568.50px;width:1.00px;height:22.50px;background:#7f9f1f;"></div><div style="position:absolute;left:768.75px;top:561.00px;width:66.75px;height:30.00px;background:#6b52a3;"></div><div style="position:absolute;left:855.00px;top:561.00px;width:2.00px;height:30.00px;background:#6b52a3;"></div><div style="position:absolute;left:857.00px;top:568.50px;width:3.00px;height:22.50px;background:#7f9f1f;"></div><div style="position:absolute;left:862.00px;top:561.00px;width:1.00px;height:30.00px;background:#7a67b3;"></div><div style="position:absolute;left:863.25px;top:568.50px;width:2.25px;height:22.50px;background:#7f9f1f;"></div><div style="position:absolute;left:228.40px;top:591.00px;width:1022.60px;height:1.00px;background:#dcdcdc;"></div><div style="position:absolute;left:228.40px;top:591.00px;width:1.00px;height:4.00px;background:#d9d9d9;"></div><div class="t" style="left:231.80px;top:591.8px;font-size:8.3px;color:#666;transform:scaleX(0.88);transform-origin:0 0">00</div><div style="position:absolute;left:271.00px;top:591.00px;width:1.00px;height:4.00px;background:#d9d9d9;"></div><div class="t" style="left:274.40px;top:591.8px;font-size:8.3px;color:#666;transform:scaleX(0.88);transform-origin:0 0">01</div><div style="position:absolute;left:313.60px;top:591.00px;width:1.00px;height:4.00px;background:#d9d9d9;"></div><div class="t" style="left:317.00px;top:591.8px;font-size:8.3px;color:#666;transform:scaleX(0.88);transform-origin:0 0">02</div><div style="position:absolute;left:356.20px;top:591.00px;width:1.00px;height:4.00px;background:#d9d9d9;"></div><div class="t" style="left:359.60px;top:591.8px;font-size:8.3px;color:#666;transform:scaleX(0.88);transform-origin:0 0">03</div><div style="position:absolute;left:398.80px;top:591.00px;width:1.00px;height:4.00px;background:#d9d9d9;"></div><div class="t" style="left:402.20px;top:591.8px;font-size:8.3px;color:#666;transform:scaleX(0.88);transform-origin:0 0">04</div><div style="position:absolute;left:441.40px;top:591.00px;width:1.00px;height:4.00px;background:#d9d9d9;"></div><div class="t" style="left:444.80px;top:591.8px;font-size:8.3px;color:#666;transform:scaleX(0.88);transform-origin:0 0">05</div><div style="position:absolute;left:484.00px;top:591.00px;width:1.00px;height:4.00px;background:#d9d9d9;"></div><div class="t" style="left:487.40px;top:591.8px;font-size:8.3px;color:#666;transform:scaleX(0.88);transform-origin:0 0">06</div><div style="position:absolute;left:526.60px;top:591.00px;width:1.00px;height:4.00px;background:#d9d9d9;"></div><div class="t" style="left:530.00px;top:591.8px;font-size:8.3px;color:#666;transform:scaleX(0.88);transform-origin:0 0">07</div><div style="position:absolute;left:569.20px;top:591.00px;width:1.00px;height:4.00px;background:#d9d9d9;"></div><div class="t" style="left:572.60px;top:591.8px;font-size:8.3px;color:#666;transform:scaleX(0.88);transform-origin:0 0">08</div><div style="position:absolute;left:611.80px;top:591.00px;width:1.00px;height:4.00px;background:#d9d9d9;"></div><div class="t" style="left:615.20px;top:591.8px;font-size:8.3px;color:#666;transform:scaleX(0.88);transform-origin:0 0">09</div><div style="position:absolute;left:654.40px;top:591.00px;width:1.00px;height:4.00px;background:#d9d9d9;"></div><div class="t" style="left:657.80px;top:591.8px;font-size:8.3px;color:#666;transform:scaleX(0.88);transform-origin:0 0">10</div><div style="position:absolute;left:697.00px;top:591.00px;width:1.00px;height:4.00px;background:#d9d9d9;"></div><div class="t" style="left:700.40px;top:591.8px;font-size:8.3px;color:#666;transform:scaleX(0.88);transform-origin:0 0">11</div><div style="position:absolute;left:739.60px;top:591.00px;width:1.00px;height:4.00px;background:#d9d9d9;"></div><div class="t" style="left:743.00px;top:591.8px;font-size:8.3px;color:#666;transform:scaleX(0.88);transform-origin:0 0">12</div><div style="position:absolute;left:782.20px;top:591.00px;width:1.00px;height:4.00px;background:#d9d9d9;"></div><div class="t" style="left:785.60px;top:591.8px;font-size:8.3px;color:#666;transform:scaleX(0.88);transform-origin:0 0">14</div><div style="position:absolute;left:824.80px;top:591.00px;width:1.00px;height:4.00px;background:#d9d9d9;"></div><div class="t" style="left:828.20px;top:591.8px;font-size:8.3px;color:#666;transform:scaleX(0.88);transform-origin:0 0">14</div><div style="position:absolute;left:867.40px;top:591.00px;width:1.00px;height:4.00px;background:#d9d9d9;"></div><div class="t" style="left:870.80px;top:591.8px;font-size:8.3px;color:#666;transform:scaleX(0.88);transform-origin:0 0">15</div><div style="position:absolute;left:910.00px;top:591.00px;width:1.00px;height:4.00px;background:#d9d9d9;"></div><div class="t" style="left:913.40px;top:591.8px;font-size:8.3px;color:#666;transform:scaleX(0.88);transform-origin:0 0">16</div><div style="position:absolute;left:952.60px;top:591.00px;width:1.00px;height:4.00px;background:#d9d9d9;"></div><div class="t" style="left:956.00px;top:591.8px;font-size:8.3px;color:#666;transform:scaleX(0.88);transform-origin:0 0">17</div><div style="position:absolute;left:995.20px;top:591.00px;width:1.00px;height:4.00px;background:#d9d9d9;"></div><div class="t" style="left:998.60px;top:591.8px;font-size:8.3px;color:#666;transform:scaleX(0.88);transform-origin:0 0">18</div><div style="position:absolute;left:1037.80px;top:591.00px;width:1.00px;height:4.00px;background:#d9d9d9;"></div><div class="t" style="left:1041.20px;top:591.8px;font-size:8.3px;color:#666;transform:scaleX(0.88);transform-origin:0 0">19</div><div style="position:absolute;left:1080.40px;top:591.00px;width:1.00px;height:4.00px;background:#d9d9d9;"></div><div class="t" style="left:1083.80px;top:591.8px;font-size:8.3px;color:#666;transform:scaleX(0.88);transform-origin:0 0">20</div><div style="position:absolute;left:1123.00px;top:591.00px;width:1.00px;height:4.00px;background:#d9d9d9;"></div><div class="t" style="left:1126.40px;top:591.8px;font-size:8.3px;color:#666;transform:scaleX(0.88);transform-origin:0 0">21</div><div style="position:absolute;left:1165.60px;top:591.00px;width:1.00px;height:4.00px;background:#d9d9d9;"></div><div class="t" style="left:1169.00px;top:591.8px;font-size:8.3px;color:#666;transform:scaleX(0.88);transform-origin:0 0">22</div><div style="position:absolute;left:1208.20px;top:591.00px;width:1.00px;height:4.00px;background:#d9d9d9;"></div><div class="t" style="left:1211.60px;top:591.8px;font-size:8.3px;color:#666;transform:scaleX(0.88);transform-origin:0 0">23</div><div style="position:absolute;left:23.00px;top:602.00px;width:1228.00px;height:1.00px;background:#dddddd;"></div><div style="position:absolute;left:23.00px;top:603.00px;width:1228.00px;height:41.00px;background:#f4f4f4;"></div><div class="t" style="left:32.5px;top:618px;font-size:9px;color:#555">2014-09-12</div><svg class="a" style="left:82px;top:619px" width="6" height="9" viewBox="0 0 6 9"><path d="M1.2 1 L4.6 4.5 L1.2 8" fill="none" stroke="#444" stroke-width="1.5"/></svg><div style="position:absolute;left:228.40px;top:625.40px;width:1022.60px;height:7.60px;background:#d6eefa;"></div><div style="position:absolute;left:728.00px;top:603.00px;width:25.00px;height:30.00px;background:#6b52a3;"></div><div style="position:absolute;left:836.25px;top:603.00px;width:46.75px;height:30.00px;background:#6b52a3;"></div><div style="position:absolute;left:898.75px;top:603.00px;width:1.25px;height:30.00px;background:#7a67b3;"></div><div style="position:absolute;left:900.50px;top:610.50px;width:3.25px;height:22.50px;background:#7f9f1f;"></div><div style="position:absolute;left:943.75px;top:603.00px;width:43.00px;height:30.00px;background:#6b52a3;"></div><div style="position:absolute;left:990.00px;top:603.00px;width:92.75px;height:30.00px;background:#6b52a3;"></div><div style="position:absolute;left:1090.00px;top:603.00px;width:42.50px;height:30.00px;background:#6b52a3;"></div><div style="position:absolute;left:228.40px;top:633.00px;width:1022.60px;height:1.00px;background:#dcdcdc;"></div><div style="position:absolute;left:228.40px;top:633.00px;width:1.00px;height:4.00px;background:#d9d9d9;"></div><div class="t" style="left:231.80px;top:633.8px;font-size:8.3px;color:#666;transform:scaleX(0.88);transform-origin:0 0">00</div><div style="position:absolute;left:271.00px;top:633.00px;width:1.00px;height:4.00px;background:#d9d9d9;"></div><div class="t" style="left:274.40px;top:633.8px;font-size:8.3px;color:#666;transform:scaleX(0.88);transform-origin:0 0">01</div><div style="position:absolute;left:313.60px;top:633.00px;width:1.00px;height:4.00px;background:#d9d9d9;"></div><div class="t" style="left:317.00px;top:633.8px;font-size:8.3px;color:#666;transform:scaleX(0.88);transform-origin:0 0">02</div><div style="position:absolute;left:356.20px;top:633.00px;width:1.00px;height:4.00px;background:#d9d9d9;"></div><div class="t" style="left:359.60px;top:633.8px;font-size:8.3px;color:#666;transform:scaleX(0.88);transform-origin:0 0">03</div><div style="position:absolute;left:398.80px;top:633.00px;width:1.00px;height:4.00px;background:#d9d9d9;"></div><div class="t" style="left:402.20px;top:633.8px;font-size:8.3px;color:#666;transform:scaleX(0.88);transform-origin:0 0">04</div><div style="position:absolute;left:441.40px;top:633.00px;width:1.00px;height:4.00px;background:#d9d9d9;"></div><div class="t" style="left:444.80px;top:633.8px;font-size:8.3px;color:#666;transform:scaleX(0.88);transform-origin:0 0">05</div><div style="position:absolute;left:484.00px;top:633.00px;width:1.00px;height:4.00px;background:#d9d9d9;"></div><div class="t" style="left:487.40px;top:633.8px;font-size:8.3px;color:#666;transform:scaleX(0.88);transform-origin:0 0">06</div><div style="position:absolute;left:526.60px;top:633.00px;width:1.00px;height:4.00px;background:#d9d9d9;"></div><div class="t" style="left:530.00px;top:633.8px;font-size:8.3px;color:#666;transform:scaleX(0.88);transform-origin:0 0">07</div><div style="position:absolute;left:569.20px;top:633.00px;width:1.00px;height:4.00px;background:#d9d9d9;"></div><div class="t" style="left:572.60px;top:633.8px;font-size:8.3px;color:#666;transform:scaleX(0.88);transform-origin:0 0">08</div><div style="position:absolute;left:611.80px;top:633.00px;width:1.00px;height:4.00px;background:#d9d9d9;"></div><div class="t" style="left:615.20px;top:633.8px;font-size:8.3px;color:#666;transform:scaleX(0.88);transform-origin:0 0">09</div><div style="position:absolute;left:654.40px;top:633.00px;width:1.00px;height:4.00px;background:#d9d9d9;"></div><div class="t" style="left:657.80px;top:633.8px;font-size:8.3px;color:#666;transform:scaleX(0.88);transform-origin:0 0">10</div><div style="position:absolute;left:697.00px;top:633.00px;width:1.00px;height:4.00px;background:#d9d9d9;"></div><div class="t" style="left:700.40px;top:633.8px;font-size:8.3px;color:#666;transform:scaleX(0.88);transform-origin:0 0">11</div><div style="position:absolute;left:739.60px;top:633.00px;width:1.00px;height:4.00px;background:#d9d9d9;"></div><div class="t" style="left:743.00px;top:633.8px;font-size:8.3px;color:#666;transform:scaleX(0.88);transform-origin:0 0">12</div><div style="position:absolute;left:782.20px;top:633.00px;width:1.00px;height:4.00px;background:#d9d9d9;"></div><div class="t" style="left:785.60px;top:633.8px;font-size:8.3px;color:#666;transform:scaleX(0.88);transform-origin:0 0">14</div><div style="position:absolute;left:824.80px;top:633.00px;width:1.00px;height:4.00px;background:#d9d9d9;"></div><div class="t" style="left:828.20px;top:633.8px;font-size:8.3px;color:#666;transform:scaleX(0.88);transform-origin:0 0">14</div><div style="position:absolute;left:867.40px;top:633.00px;width:1.00px;height:4.00px;background:#d9d9d9;"></div><div class="t" style="left:870.80px;top:633.8px;font-size:8.3px;color:#666;transform:scaleX(0.88);transform-origin:0 0">15</div><div style="position:absolute;left:910.00px;top:633.00px;width:1.00px;height:4.00px;background:#d9d9d9;"></div><div class="t" style="left:913.40px;top:633.8px;font-size:8.3px;color:#666;transform:scaleX(0.88);transform-origin:0 0">16</div><div style="position:absolute;left:952.60px;top:633.00px;width:1.00px;height:4.00px;background:#d9d9d9;"></div><div class="t" style="left:956.00px;top:633.8px;font-size:8.3px;color:#666;transform:scaleX(0.88);transform-origin:0 0">17</div><div style="position:absolute;left:995.20px;top:633.00px;width:1.00px;height:4.00px;background:#d9d9d9;"></div><div class="t" style="left:998.60px;top:633.8px;font-size:8.3px;color:#666;transform:scaleX(0.88);transform-origin:0 0">18</div><div style="position:absolute;left:1037.80px;top:633.00px;width:1.00px;height:4.00px;background:#d9d9d9;"></div><div class="t" style="left:1041.20px;top:633.8px;font-size:8.3px;color:#666;transform:scaleX(0.88);transform-origin:0 0">19</div><div style="position:absolute;left:1080.40px;top:633.00px;width:1.00px;height:4.00px;background:#d9d9d9;"></div><div class="t" style="left:1083.80px;top:633.8px;font-size:8.3px;color:#666;transform:scaleX(0.88);transform-origin:0 0">20</div><div style="position:absolute;left:1123.00px;top:633.00px;width:1.00px;height:4.00px;background:#d9d9d9;"></div><div class="t" style="left:1126.40px;top:633.8px;font-size:8.3px;color:#666;transform:scaleX(0.88);transform-origin:0 0">21</div><div style="position:absolute;left:1165.60px;top:633.00px;width:1.00px;height:4.00px;background:#d9d9d9;"></div><div class="t" style="left:1169.00px;top:633.8px;font-size:8.3px;color:#666;transform:scaleX(0.88);transform-origin:0 0">22</div><div style="position:absolute;left:1208.20px;top:633.00px;width:1.00px;height:4.00px;background:#d9d9d9;"></div><div class="t" style="left:1211.60px;top:633.8px;font-size:8.3px;color:#666;transform:scaleX(0.88);transform-origin:0 0">23</div><div style="position:absolute;left:23.00px;top:644.00px;width:1228.00px;height:1.00px;background:#dddddd;"></div><div style="position:absolute;left:0.00px;top:619.00px;width:1280.00px;height:2.00px;background:#fff;"></div><div style="position:absolute;left:1251.00px;top:339.00px;width:11.00px;height:280.00px;background:#f1f1f1;"></div><div style="position:absolute;left:1252.00px;top:390.00px;width:8.00px;height:58.00px;background:#c1c1c1;"></div><svg class="a" style="left:1252px;top:342px" width="9" height="6" viewBox="0 0 9 6"><path d="M1.5 4.5 L4.5 1.5 L7.5 4.5Z" fill="#505050"/></svg><svg class="a" style="left:1252px;top:611px" width="9" height="6" viewBox="0 0 9 6"><path d="M1.5 1.5 L4.5 4.5 L7.5 1.5Z" fill="#505050"/></svg></body></html>
